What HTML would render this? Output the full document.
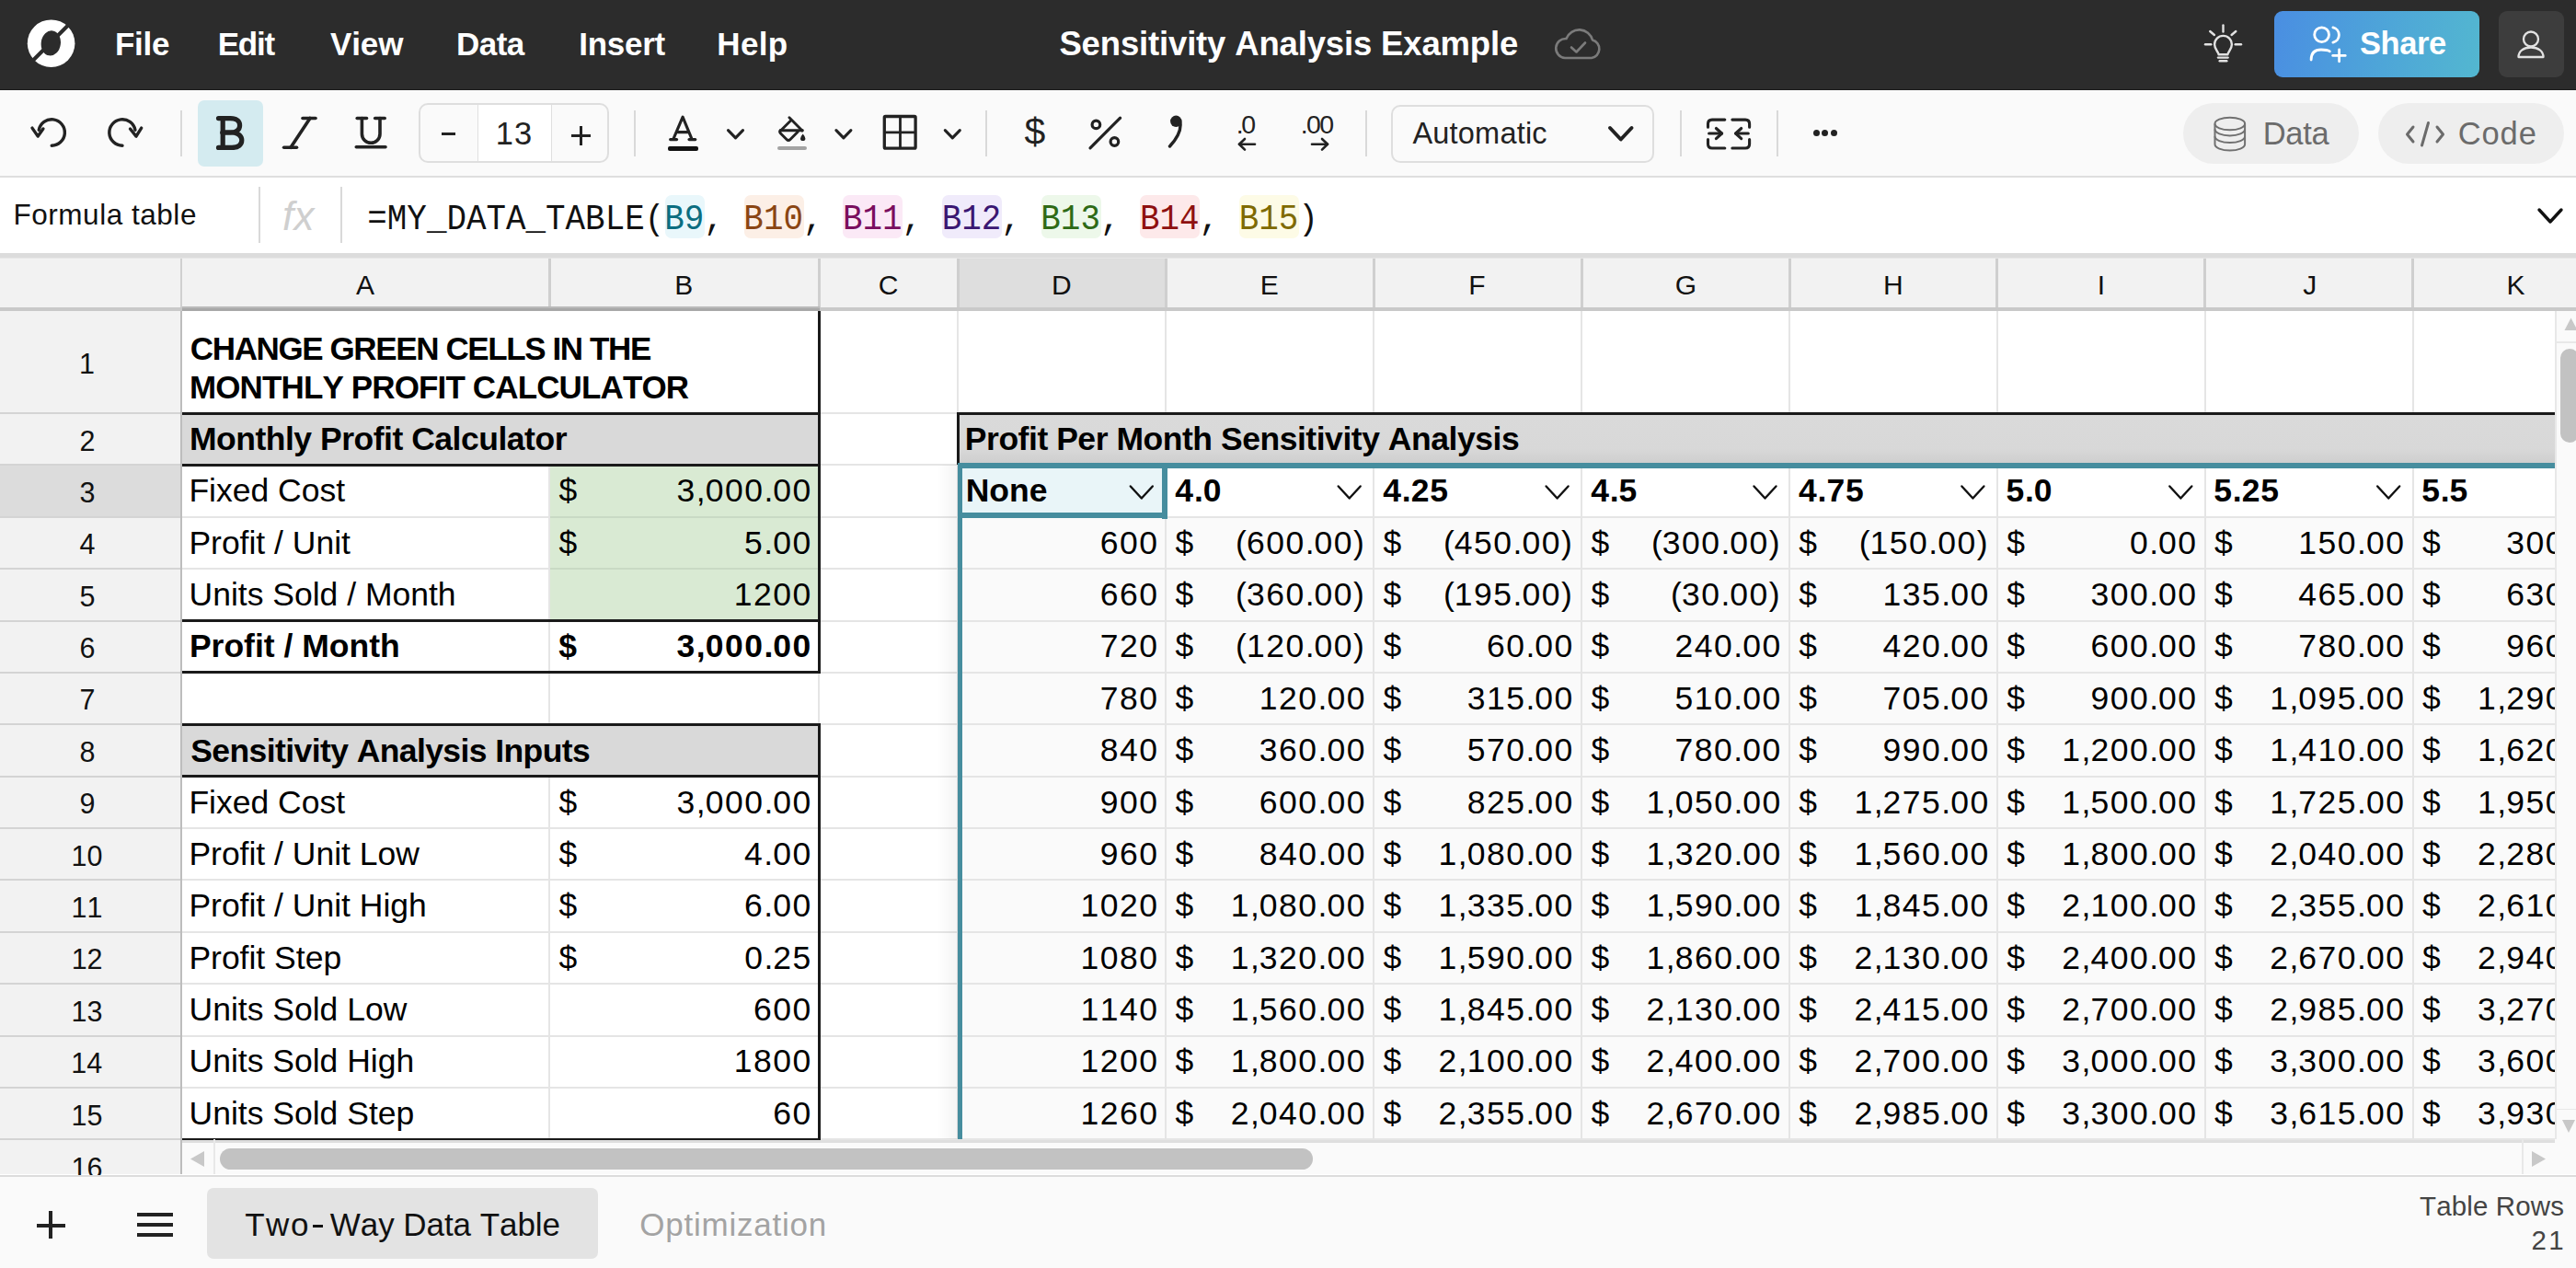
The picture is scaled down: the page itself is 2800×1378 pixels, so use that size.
<!DOCTYPE html>
<html><head><meta charset="utf-8"><title>Sensitivity Analysis Example</title>
<style>
html,body{margin:0;padding:0;}
body{width:2800px;height:1378px;overflow:hidden;position:relative;background:#fff;font-family:'Liberation Sans', sans-serif;font-kerning:none;}
.r,.t{position:absolute;}
.t{white-space:pre;}
svg.r{overflow:visible;}
</style></head><body>
<div class="r" style="left:0.00px;top:0.00px;width:2800.00px;height:97.00px;background:#2c2c2c;"></div>
<div class="r" style="left:0.00px;top:96.50px;width:2800.00px;height:1.80px;background:#1c1c1c;"></div>
<div class="r" style="left:0.00px;top:98.30px;width:2800.00px;height:1.20px;background:#ffffff;"></div>
<svg class="r" style="left:28px;top:20px;" width="56" height="56" viewBox="0 0 56 56"><circle cx="27.6" cy="27.2" r="25.8" fill="#fff"/><ellipse cx="27.3" cy="26.9" rx="10.6" ry="13.6" fill="#2c2c2c" transform="rotate(8 27.3 26.9)"/><line x1="47" y1="6.5" x2="6.5" y2="47" stroke="#2c2c2c" stroke-width="4"/></svg>
<div class="t" style="left:124.96px;top:29.77px;font-size:35px;line-height:35px;color:#fff;font-weight:bold;letter-spacing:-0.285px;">File</div>
<div class="t" style="left:236.66px;top:29.77px;font-size:35px;line-height:35px;color:#fff;font-weight:bold;letter-spacing:-1.178px;">Edit</div>
<div class="t" style="left:359.06px;top:29.77px;font-size:35px;line-height:35px;color:#fff;font-weight:bold;letter-spacing:-0.129px;">View</div>
<div class="t" style="left:496.06px;top:29.77px;font-size:35px;line-height:35px;color:#fff;font-weight:bold;letter-spacing:-0.548px;">Data</div>
<div class="t" style="left:629.36px;top:29.77px;font-size:35px;line-height:35px;color:#fff;font-weight:bold;letter-spacing:-0.308px;">Insert</div>
<div class="t" style="left:779.36px;top:29.77px;font-size:35px;line-height:35px;color:#fff;font-weight:bold;letter-spacing:0.311px;">Help</div>
<div class="t" style="left:1151.45px;top:30.00px;font-size:36.5px;line-height:36.5px;color:#fff;font-weight:bold;letter-spacing:-0.160px;">Sensitivity Analysis Example</div>
<svg class="r" style="left:1688px;top:28px;" width="56" height="40" viewBox="0 0 56 40"><path d="M13 35 H42 A10 10 0 0 0 43 15.5 A15 15 0 0 0 14.5 14 A10.5 10.5 0 0 0 13 35 Z" fill="none" stroke="#7b7b7b" stroke-width="2.6" stroke-linejoin="round"/><path d="M20 23.5 L25.5 28.5 L35 18.5" fill="none" stroke="#7b7b7b" stroke-width="2.6" stroke-linecap="round" stroke-linejoin="round"/></svg>
<svg class="r" style="left:2392px;top:24px;" width="48" height="48" viewBox="0 0 48 48"><g fill="none" stroke="#e2e2e2" stroke-width="2.4" stroke-linecap="round" stroke-linejoin="round"><line x1="24.5" y1="3.5" x2="24.5" y2="10.5"/><line x1="10.2" y1="10" x2="14.9" y2="14"/><line x1="38.3" y1="10" x2="33.6" y2="14"/><line x1="5" y1="24.3" x2="11.3" y2="24.3"/><line x1="37.7" y1="24.3" x2="44" y2="24.3"/><path d="M19.6 35.3 C19.6 32.5 15.1 30 15.1 24.3 A9.4 9.4 0 0 1 33.9 24.3 C33.9 30 29.4 32.5 29.4 35.3 Z"/><line x1="19" y1="38.6" x2="29.6" y2="38.6"/><line x1="20.7" y1="42.2" x2="28.3" y2="42.2"/></g></svg>
<div class="r" style="left:2472.00px;top:12.00px;width:223.00px;height:72.00px;background:linear-gradient(100deg,#4a8ee2 0%,#4ea6d8 55%,#53b7d0 100%);border-radius:9px;"></div>
<svg class="r" style="left:2505px;top:26px;" width="52" height="44" viewBox="0 0 52 44"><g fill="none" stroke="#fff" stroke-width="2.8" stroke-linecap="round"><circle cx="18.6" cy="11.7" r="7.9"/><path d="M30.9 3.9 A8.3 8.3 0 0 1 30.9 20.1"/><path d="M7.1 39 C7.1 32 11 28 18 28 C22 28 25.5 28.5 27.4 29.8"/><line x1="37.6" y1="28" x2="37.6" y2="40.8"/><line x1="30.7" y1="34.4" x2="44.2" y2="34.4"/></g></svg>
<div class="t" style="left:2564.91px;top:29.89px;font-size:34.5px;line-height:34.5px;color:#fff;font-weight:bold;letter-spacing:-0.403px;">Share</div>
<div class="r" style="left:2716.00px;top:12.00px;width:71.00px;height:72.00px;background:#3d3d3d;border-radius:9px;"></div>
<svg class="r" style="left:2730px;top:28px;" width="42" height="40" viewBox="0 0 42 40"><g fill="none" stroke="#e2e2e2" stroke-width="2.3"><circle cx="21" cy="14.5" r="8"/><path d="M7.5 34 C7.5 27.5 13 23.5 21 23.5 C29 23.5 34.5 27.5 34.5 34 Z" stroke-linejoin="round"/></g></svg>
<div class="r" style="left:0.00px;top:98.00px;width:2800.00px;height:93.00px;background:#fafafa;"></div>
<div class="r" style="left:0.00px;top:191.00px;width:2800.00px;height:2.00px;background:#dedede;"></div>
<svg class="r" style="left:28px;top:118px;" width="52" height="50" viewBox="0 0 52 50"><g fill="none" stroke="#222" stroke-width="3.4" stroke-linecap="round" stroke-linejoin="round"><path d="M14.26 23.3 A14.2 14.2 0 1 1 28.2 40.2"/><path d="M7 21.1 L13.2 30.1 L18.9 22"/></g></svg>
<svg class="r" style="left:100px;top:118px;" width="52" height="50" viewBox="0 0 52 50"><g fill="none" stroke="#222" stroke-width="3.4" stroke-linecap="round" stroke-linejoin="round"><path d="M46.94 23.3 A14.2 14.2 0 1 0 33 40.2"/><path d="M53.7 21.1 L48 30.1 L41.5 22"/></g></svg>
<div class="r" style="left:196.00px;top:119.60px;width:2.00px;height:50.40px;background:#d9d9d9;"></div>
<div class="r" style="left:214.80px;top:109.00px;width:71.20px;height:71.70px;background:#d4ebf0;border-radius:7px;"></div>
<svg class="r" style="left:228px;top:120px;" width="42" height="48" viewBox="0 0 42 48"><g fill="none" stroke="#222" stroke-width="5.2" stroke-linecap="round" stroke-linejoin="round"><path d="M9.5 8.6 H22.5 C30 8.6 32.6 12.5 32.6 16.3 C32.6 20.5 29.5 24 22.5 24 H14"/><path d="M14 24 H24 C31.5 24 34.8 28.5 34.8 32.3 C34.8 37 31.5 40.4 24 40.4 H9.5"/><line x1="14.2" y1="8.6" x2="14.2" y2="40.4"/></g></svg>
<svg class="r" style="left:300px;top:120px;" width="50" height="48" viewBox="0 0 50 48"><g fill="none" stroke="#222" stroke-width="3.6" stroke-linecap="round"><line x1="29" y1="8.5" x2="43" y2="8.5"/><line x1="8.6" y1="40.3" x2="22.5" y2="40.3"/><line x1="37" y1="8.5" x2="16" y2="40.3"/></g></svg>
<svg class="r" style="left:380px;top:120px;" width="46" height="48" viewBox="0 0 46 48"><g fill="none" stroke="#222" stroke-width="3.6" stroke-linecap="round"><line x1="8.2" y1="8.5" x2="18.5" y2="8.5"/><line x1="27.7" y1="8.5" x2="38.2" y2="8.5"/><path d="M13.4 8.5 V25.5 A9.8 9.8 0 0 0 33 25.5 V8.5"/><line x1="7.3" y1="39.7" x2="39" y2="39.7"/></g></svg>
<div class="r" style="left:455.40px;top:112.00px;width:207.00px;height:65.00px;background:#fafafa;border:2px solid #dedede;border-radius:10px;box-sizing:border-box;"></div>
<div class="r" style="left:519.50px;top:114.00px;width:80.00px;height:61.00px;background:#fff;"></div>
<div class="r" style="left:518.80px;top:114.00px;width:1.60px;height:61.00px;background:#e0e0e0;"></div>
<div class="r" style="left:598.80px;top:114.00px;width:1.60px;height:61.00px;background:#e0e0e0;"></div>
<div class="r" style="left:480.00px;top:144.00px;width:14.50px;height:3.20px;background:#222;"></div>
<div class="t" style="left:538.66px;top:128.39px;font-size:34.5px;line-height:34.5px;color:#222;letter-spacing:1.200px;">13</div>
<div class="r" style="left:621.00px;top:145.60px;width:20.50px;height:3.20px;background:#222;"></div>
<div class="r" style="left:629.60px;top:137.00px;width:3.20px;height:20.50px;background:#222;"></div>
<div class="r" style="left:689.40px;top:119.60px;width:2.00px;height:50.40px;background:#d9d9d9;"></div>
<svg class="r" style="left:722px;top:120px;" width="40" height="40" viewBox="0 0 40 40"><g fill="none" stroke="#222" stroke-width="3.1" stroke-linecap="round" stroke-linejoin="round"><path d="M9.9 31.2 L20.1 7.1 L30 31.2"/><line x1="14.8" y1="23.6" x2="25.5" y2="23.6"/><line x1="6.6" y1="31.6" x2="13.6" y2="31.6"/><line x1="27" y1="31.6" x2="33.8" y2="31.6"/></g></svg>
<div class="r" style="left:725.70px;top:159.40px;width:33.50px;height:4.20px;background:#111;border-radius:2px;"></div>
<svg class="r" style="left:788px;top:138px;" width="24" height="16" viewBox="0 0 24 16"><path d="M3.50 3.60 l8.00 8.20 l8.00 -8.20" fill="none" stroke="#222" stroke-width="3.1" stroke-linecap="round" stroke-linejoin="round"/></svg>
<svg class="r" style="left:842px;top:122px;" width="40" height="36" viewBox="0 0 40 36"><g fill="none" stroke="#222" stroke-width="2.9" stroke-linecap="round" stroke-linejoin="round"><path d="M15.9 5.7 L30 20"/><path d="M6 20.5 L17.3 9.3"/><path d="M6.2 19.8 H30.3"/><path d="M25.2 21.2 L17 29.5 Q15 31.5 13 29.5 L6.5 23 Q5 21.5 6.2 19.8"/></g><path d="M30.7 23.6 Q33.4 26.8 33.4 28.4 A2.7 2.7 0 0 1 28 28.4 Q28 26.8 30.7 23.6 Z" fill="#222"/></svg>
<div class="r" style="left:845.30px;top:159.40px;width:31.70px;height:3.70px;background:#a3a3a3;border-radius:2px;"></div>
<svg class="r" style="left:905px;top:138px;" width="24" height="16" viewBox="0 0 24 16"><path d="M3.90 3.60 l8.00 8.20 l8.00 -8.20" fill="none" stroke="#222" stroke-width="3.1" stroke-linecap="round" stroke-linejoin="round"/></svg>
<svg class="r" style="left:956px;top:122px;" width="46" height="44" viewBox="0 0 46 44"><g fill="none" stroke="#222" stroke-width="3.3" stroke-linejoin="round"><rect x="5.3" y="4.5" width="33.8" height="34.7" rx="1.2"/><line x1="22.5" y1="4.5" x2="22.5" y2="39.2" stroke-width="2.8"/><line x1="5.3" y1="21.9" x2="39.1" y2="21.9" stroke-width="2.8"/></g></svg>
<svg class="r" style="left:1023px;top:138px;" width="24" height="16" viewBox="0 0 24 16"><path d="M4.30 3.60 l8.00 8.20 l8.00 -8.20" fill="none" stroke="#222" stroke-width="3.1" stroke-linecap="round" stroke-linejoin="round"/></svg>
<div class="r" style="left:1071.30px;top:119.60px;width:2.00px;height:50.40px;background:#d9d9d9;"></div>
<div class="t" style="left:1113.51px;top:123.29px;font-size:41px;line-height:41px;color:#222;">$</div>
<svg class="r" style="left:1180px;top:124px;" width="44" height="42" viewBox="0 0 44 42"><g fill="none" stroke="#222" stroke-width="3.2" stroke-linecap="round"><circle cx="11.4" cy="11.4" r="4.3"/><circle cx="31.4" cy="30" r="4.3"/><line x1="37.6" y1="4.2" x2="5" y2="36.8"/></g></svg>
<svg class="r" style="left:1264px;top:122px;" width="28" height="42" viewBox="0 0 28 42"><circle cx="14.3" cy="9.8" r="6.2" fill="#222"/><path d="M18.5 9 C21 19 15 29 7.5 37" fill="none" stroke="#222" stroke-width="3.4" stroke-linecap="round"/></svg>
<div class="t" style="left:1343.80px;top:121.47px;font-size:28.5px;line-height:28.5px;color:#222;letter-spacing:-2.453px;">.0</div>
<svg class="r" style="left:1342px;top:148px;" width="28" height="18" viewBox="0 0 28 18"><g fill="none" stroke="#222" stroke-width="2.6" stroke-linecap="round" stroke-linejoin="round"><line x1="5" y1="8.8" x2="22" y2="8.8"/><path d="M11 3 L5 8.8 L11 14.6"/></g></svg>
<div class="t" style="left:1413.70px;top:121.47px;font-size:28.5px;line-height:28.5px;color:#222;letter-spacing:-1.652px;">.00</div>
<svg class="r" style="left:1421px;top:148px;" width="28" height="18" viewBox="0 0 28 18"><g fill="none" stroke="#222" stroke-width="2.6" stroke-linecap="round" stroke-linejoin="round"><line x1="5" y1="8.8" x2="22" y2="8.8"/><path d="M16 3 L22 8.8 L16 14.6"/></g></svg>
<div class="r" style="left:1484.30px;top:119.60px;width:2.00px;height:50.40px;background:#d9d9d9;"></div>
<div class="r" style="left:1512.30px;top:114.00px;width:286.20px;height:63.30px;background:#fafafa;border:2px solid #dedede;border-radius:10px;box-sizing:border-box;"></div>
<div class="t" style="left:1535.44px;top:128.78px;font-size:32.5px;line-height:32.5px;color:#222;letter-spacing:0.202px;">Automatic</div>
<svg class="r" style="left:1746px;top:135px;" width="32" height="20" viewBox="0 0 32 20"><path d="M4.00 4.00 l11.75 12.50 l11.75 -12.50" fill="none" stroke="#222" stroke-width="4" stroke-linecap="round" stroke-linejoin="round"/></svg>
<div class="r" style="left:1825.70px;top:119.60px;width:2.00px;height:50.40px;background:#d9d9d9;"></div>
<svg class="r" style="left:1850px;top:124px;" width="58" height="44" viewBox="0 0 58 44"><g fill="none" stroke="#222" stroke-width="3.1" stroke-linecap="round" stroke-linejoin="round"><path d="M24.8 6.1 H11 Q6.5 6.1 6.5 10.6 V14.2"/><path d="M6.5 27.6 V32.5 Q6.5 37 11 37 H24.8"/><path d="M32.9 6.1 H47.1 Q51.6 6.1 51.6 10.6 V14.2"/><path d="M51.6 27.6 V32.5 Q51.6 37 47.1 37 H32.9"/><line x1="7.6" y1="21" x2="21.6" y2="21"/><path d="M15.4 15.5 L21.6 21 L15.4 26.6"/><line x1="50.3" y1="21" x2="36.6" y2="21"/><path d="M42.7 15.5 L36.6 21 L42.7 26.6"/></g></svg>
<div class="r" style="left:1930.50px;top:119.60px;width:2.00px;height:50.40px;background:#d9d9d9;"></div>
<div class="r" style="left:1970.60px;top:140.70px;width:7.2px;height:7.2px;border-radius:50%;background:#222"></div>
<div class="r" style="left:1980.30px;top:140.70px;width:7.2px;height:7.2px;border-radius:50%;background:#222"></div>
<div class="r" style="left:1990.00px;top:140.70px;width:7.2px;height:7.2px;border-radius:50%;background:#222"></div>
<div class="r" style="left:2372.80px;top:112.30px;width:191.20px;height:65.40px;background:#eeeeee;border-radius:33px;"></div>
<svg class="r" style="left:2403px;top:123px;" width="42" height="46" viewBox="0 0 42 46"><g fill="none" stroke="#707070" stroke-width="2.0"><ellipse cx="20.8" cy="11.5" rx="16.3" ry="6.8"/><path d="M4.5 11.5 V33.8 A16.3 6.8 0 0 0 37.1 33.8 V11.5"/><path d="M4.5 17.6 A16.3 6.8 0 0 0 37.1 17.6"/><path d="M4.5 25.3 A16.3 6.8 0 0 0 37.1 25.3"/></g></svg>
<div class="t" style="left:2459.67px;top:127.99px;font-size:34.5px;line-height:34.5px;color:#6b6b6b;letter-spacing:-0.315px;">Data</div>
<div class="r" style="left:2585.40px;top:112.30px;width:201.60px;height:65.40px;background:#eeeeee;border-radius:33px;"></div>
<svg class="r" style="left:2612px;top:130px;" width="48" height="32" viewBox="0 0 48 32"><g fill="none" stroke="#6b6b6b" stroke-width="3" stroke-linecap="round" stroke-linejoin="round"><path d="M11 8 L4.5 16 L11 24"/><path d="M37 8 L43.5 16 L37 24"/><line x1="27.5" y1="3.5" x2="20.5" y2="28"/></g></svg>
<div class="t" style="left:2671.65px;top:127.99px;font-size:34.5px;line-height:34.5px;color:#6b6b6b;letter-spacing:0.936px;">Code</div>
<div class="r" style="left:0.00px;top:193.00px;width:2800.00px;height:82.00px;background:#fff;"></div>
<div class="r" style="left:0.00px;top:275.00px;width:2800.00px;height:5.00px;background:#dcdcdc;"></div>
<div class="t" style="left:14.52px;top:218.33px;font-size:31.5px;line-height:31.5px;color:#111;letter-spacing:0.525px;">Formula table</div>
<div class="r" style="left:281.00px;top:203.00px;width:2.00px;height:60.60px;background:#d9d9d9;"></div>
<div class="t" style="left:306.92px;top:213.35px;font-size:44px;line-height:44px;color:#cfcfcf;font-style:italic;letter-spacing:0.369px;">fx</div>
<div class="r" style="left:370.30px;top:203.00px;width:2.00px;height:60.60px;background:#d9d9d9;"></div>
<div class="r" style="left:722.55px;top:212.30px;width:43.56px;height:47.00px;background:#e9f7fb;border-radius:7px;"></div>
<div class="r" style="left:808.67px;top:212.30px;width:65.09px;height:47.00px;background:#fcefe6;border-radius:7px;"></div>
<div class="r" style="left:916.32px;top:212.30px;width:65.09px;height:47.00px;background:#fbe9f6;border-radius:7px;"></div>
<div class="r" style="left:1023.97px;top:212.30px;width:65.09px;height:47.00px;background:#f0ebfb;border-radius:7px;"></div>
<div class="r" style="left:1131.62px;top:212.30px;width:65.09px;height:47.00px;background:#edf8ea;border-radius:7px;"></div>
<div class="r" style="left:1239.27px;top:212.30px;width:65.09px;height:47.00px;background:#fde9ea;border-radius:7px;"></div>
<div class="r" style="left:1346.92px;top:212.30px;width:65.09px;height:47.00px;background:#fdfbe6;border-radius:7px;"></div>
<div class="t" style="left:399.30px;top:222.11px;font-size:35.883px;line-height:35.883px;color:#111;font-family:'Liberation Mono', monospace;transform-origin:0 27.49px;transform:scaleY(1.09);">=MY_DATA_TABLE(<span style="color:#0b6d80">B9</span>, <span style="color:#8a4513">B10</span>, <span style="color:#7a0e5e">B11</span>, <span style="color:#3a1772">B12</span>, <span style="color:#2e6a16">B13</span>, <span style="color:#8e1010">B14</span>, <span style="color:#7f6a00">B15</span>)</div>
<svg class="r" style="left:2756px;top:224px;" width="32" height="21" viewBox="0 0 32 21"><path d="M4.00 4.00 l12.00 13.00 l12.00 -13.00" fill="none" stroke="#111" stroke-width="3.4" stroke-linecap="round" stroke-linejoin="round"/></svg>
<div class="r" style="left:0.00px;top:280.00px;width:2800.00px;height:958.32px;background:#fff;"></div>
<div class="r" style="left:0.00px;top:280.00px;width:2800.00px;height:54.00px;background:#f2f2f2;"></div>
<div class="r" style="left:0.00px;top:280.00px;width:2800.00px;height:1.30px;background:#e6e6e6;"></div>
<div class="r" style="left:1041.40px;top:281.30px;width:225.90px;height:52.70px;background:#dedede;"></div>
<div class="t" style="left:387.10px;top:294.80px;font-size:30px;line-height:30px;color:#111;">A</div>
<div class="t" style="left:733.21px;top:294.80px;font-size:30px;line-height:30px;color:#111;">B</div>
<div class="t" style="left:954.83px;top:294.80px;font-size:30px;line-height:30px;color:#111;">C</div>
<div class="t" style="left:1143.00px;top:294.80px;font-size:30px;line-height:30px;color:#111;">D</div>
<div class="t" style="left:1369.66px;top:294.80px;font-size:30px;line-height:30px;color:#111;">E</div>
<div class="t" style="left:1596.36px;top:294.80px;font-size:30px;line-height:30px;color:#111;">F</div>
<div class="t" style="left:1820.75px;top:294.80px;font-size:30px;line-height:30px;color:#111;">G</div>
<div class="t" style="left:2047.11px;top:294.80px;font-size:30px;line-height:30px;color:#111;">H</div>
<div class="t" style="left:2279.68px;top:294.80px;font-size:30px;line-height:30px;color:#111;">I</div>
<div class="t" style="left:2503.13px;top:294.80px;font-size:30px;line-height:30px;color:#111;">J</div>
<div class="t" style="left:2724.58px;top:294.80px;font-size:30px;line-height:30px;color:#111;">K</div>
<div class="r" style="left:595.50px;top:281.00px;width:3.00px;height:53.00px;background:#cfcfcf;"></div>
<div class="r" style="left:888.80px;top:281.00px;width:3.00px;height:53.00px;background:#cfcfcf;"></div>
<div class="r" style="left:1039.90px;top:281.00px;width:3.00px;height:53.00px;background:#cfcfcf;"></div>
<div class="r" style="left:1265.80px;top:281.00px;width:3.00px;height:53.00px;background:#cfcfcf;"></div>
<div class="r" style="left:1491.70px;top:281.00px;width:3.00px;height:53.00px;background:#cfcfcf;"></div>
<div class="r" style="left:1717.60px;top:281.00px;width:3.00px;height:53.00px;background:#cfcfcf;"></div>
<div class="r" style="left:1943.50px;top:281.00px;width:3.00px;height:53.00px;background:#cfcfcf;"></div>
<div class="r" style="left:2169.40px;top:281.00px;width:3.00px;height:53.00px;background:#cfcfcf;"></div>
<div class="r" style="left:2395.30px;top:281.00px;width:3.00px;height:53.00px;background:#cfcfcf;"></div>
<div class="r" style="left:2621.20px;top:281.00px;width:3.00px;height:53.00px;background:#cfcfcf;"></div>
<div class="r" style="left:196.00px;top:281.00px;width:2.40px;height:53.00px;background:#d0d0d0;"></div>
<div class="r" style="left:0.00px;top:333.80px;width:2800.00px;height:3.80px;background:#c9c9c9;"></div>
<div class="r" style="left:198.00px;top:333.20px;width:692.50px;height:1.60px;background:#bababa;"></div>
<div class="r" style="left:198.00px;top:334.80px;width:692.50px;height:2.90px;background:#a8a8a8;"></div>
<div class="r" style="left:0.00px;top:337.50px;width:196.50px;height:938.50px;background:#f2f2f2;"></div>
<div class="r" style="left:0.00px;top:505.38px;width:196.50px;height:56.38px;background:#dcdcdc;"></div>
<div class="t" style="left:86.10px;top:379.63px;font-size:30.5px;line-height:30.5px;color:#111;">1</div>
<div class="t" style="left:86.52px;top:463.57px;font-size:30.5px;line-height:30.5px;color:#111;">2</div>
<div class="r" style="left:0.00px;top:448.00px;width:196.00px;height:2.00px;background:#d4d4d4;"></div>
<div class="t" style="left:86.61px;top:519.95px;font-size:30.5px;line-height:30.5px;color:#111;">3</div>
<div class="r" style="left:0.00px;top:504.00px;width:196.00px;height:2.00px;background:#d4d4d4;"></div>
<div class="t" style="left:86.62px;top:576.33px;font-size:30.5px;line-height:30.5px;color:#111;">4</div>
<div class="r" style="left:0.00px;top:561.00px;width:196.00px;height:2.00px;background:#d4d4d4;"></div>
<div class="t" style="left:86.55px;top:632.71px;font-size:30.5px;line-height:30.5px;color:#111;">5</div>
<div class="r" style="left:0.00px;top:617.00px;width:196.00px;height:2.00px;background:#d4d4d4;"></div>
<div class="t" style="left:86.41px;top:689.09px;font-size:30.5px;line-height:30.5px;color:#111;">6</div>
<div class="r" style="left:0.00px;top:674.00px;width:196.00px;height:2.00px;background:#d4d4d4;"></div>
<div class="t" style="left:86.50px;top:745.47px;font-size:30.5px;line-height:30.5px;color:#111;">7</div>
<div class="r" style="left:0.00px;top:730.00px;width:196.00px;height:2.00px;background:#d4d4d4;"></div>
<div class="t" style="left:86.52px;top:801.85px;font-size:30.5px;line-height:30.5px;color:#111;">8</div>
<div class="r" style="left:0.00px;top:786.00px;width:196.00px;height:2.00px;background:#d4d4d4;"></div>
<div class="t" style="left:86.53px;top:858.23px;font-size:30.5px;line-height:30.5px;color:#111;">9</div>
<div class="r" style="left:0.00px;top:843.00px;width:196.00px;height:2.00px;background:#d4d4d4;"></div>
<div class="t" style="left:77.47px;top:914.61px;font-size:30.5px;line-height:30.5px;color:#111;">10</div>
<div class="r" style="left:0.00px;top:899.00px;width:196.00px;height:2.00px;background:#d4d4d4;"></div>
<div class="t" style="left:77.62px;top:970.99px;font-size:30.5px;line-height:30.5px;color:#111;">11</div>
<div class="r" style="left:0.00px;top:955.00px;width:196.00px;height:2.00px;background:#d4d4d4;"></div>
<div class="t" style="left:77.64px;top:1027.37px;font-size:30.5px;line-height:30.5px;color:#111;">12</div>
<div class="r" style="left:0.00px;top:1012.00px;width:196.00px;height:2.00px;background:#d4d4d4;"></div>
<div class="t" style="left:77.55px;top:1083.75px;font-size:30.5px;line-height:30.5px;color:#111;">13</div>
<div class="r" style="left:0.00px;top:1068.00px;width:196.00px;height:2.00px;background:#d4d4d4;"></div>
<div class="t" style="left:77.32px;top:1140.13px;font-size:30.5px;line-height:30.5px;color:#111;">14</div>
<div class="r" style="left:0.00px;top:1125.00px;width:196.00px;height:2.00px;background:#d4d4d4;"></div>
<div class="t" style="left:77.52px;top:1196.51px;font-size:30.5px;line-height:30.5px;color:#111;">15</div>
<div class="r" style="left:0.00px;top:1181.00px;width:196.00px;height:2.00px;background:#d4d4d4;"></div>
<div class="t" style="left:77.55px;top:1254.09px;font-size:30.5px;line-height:30.5px;color:#111;">16</div>
<div class="r" style="left:0.00px;top:1237.00px;width:196.00px;height:2.00px;background:#d4d4d4;"></div>
<div class="r" style="left:195.50px;top:337.50px;width:2.60px;height:938.50px;background:#bdbdbd;"></div>
<div class="r" style="left:1041.40px;top:561.76px;width:1735.60px;height:676.56px;background:#fafafa;"></div>
<div class="r" style="left:198.10px;top:448.00px;width:2578.90px;height:2.00px;background:#e5e5e5;"></div>
<div class="r" style="left:198.10px;top:504.00px;width:2578.90px;height:2.00px;background:#e5e5e5;"></div>
<div class="r" style="left:198.10px;top:561.00px;width:2578.90px;height:2.00px;background:#e5e5e5;"></div>
<div class="r" style="left:198.10px;top:617.00px;width:2578.90px;height:2.00px;background:#e5e5e5;"></div>
<div class="r" style="left:198.10px;top:674.00px;width:2578.90px;height:2.00px;background:#e5e5e5;"></div>
<div class="r" style="left:198.10px;top:730.00px;width:2578.90px;height:2.00px;background:#e5e5e5;"></div>
<div class="r" style="left:198.10px;top:786.00px;width:2578.90px;height:2.00px;background:#e5e5e5;"></div>
<div class="r" style="left:198.10px;top:843.00px;width:2578.90px;height:2.00px;background:#e5e5e5;"></div>
<div class="r" style="left:198.10px;top:899.00px;width:2578.90px;height:2.00px;background:#e5e5e5;"></div>
<div class="r" style="left:198.10px;top:955.00px;width:2578.90px;height:2.00px;background:#e5e5e5;"></div>
<div class="r" style="left:198.10px;top:1012.00px;width:2578.90px;height:2.00px;background:#e5e5e5;"></div>
<div class="r" style="left:198.10px;top:1068.00px;width:2578.90px;height:2.00px;background:#e5e5e5;"></div>
<div class="r" style="left:198.10px;top:1125.00px;width:2578.90px;height:2.00px;background:#e5e5e5;"></div>
<div class="r" style="left:198.10px;top:1181.00px;width:2578.90px;height:2.00px;background:#e5e5e5;"></div>
<div class="r" style="left:198.10px;top:1237.00px;width:2578.90px;height:2.00px;background:#e5e5e5;"></div>
<div class="r" style="left:596.00px;top:337.50px;width:2.00px;height:900.82px;background:#e5e5e5;"></div>
<div class="r" style="left:889.00px;top:337.50px;width:2.00px;height:900.82px;background:#e5e5e5;"></div>
<div class="r" style="left:1040.00px;top:337.50px;width:2.00px;height:900.82px;background:#e5e5e5;"></div>
<div class="r" style="left:1266.00px;top:337.50px;width:2.00px;height:900.82px;background:#e5e5e5;"></div>
<div class="r" style="left:1492.00px;top:337.50px;width:2.00px;height:900.82px;background:#e5e5e5;"></div>
<div class="r" style="left:1718.00px;top:337.50px;width:2.00px;height:900.82px;background:#e5e5e5;"></div>
<div class="r" style="left:1944.00px;top:337.50px;width:2.00px;height:900.82px;background:#e5e5e5;"></div>
<div class="r" style="left:2170.00px;top:337.50px;width:2.00px;height:900.82px;background:#e5e5e5;"></div>
<div class="r" style="left:2396.00px;top:337.50px;width:2.00px;height:900.82px;background:#e5e5e5;"></div>
<div class="r" style="left:2622.00px;top:337.50px;width:2.00px;height:900.82px;background:#e5e5e5;"></div>
<div class="r" style="left:198.10px;top:337.50px;width:692.20px;height:111.50px;background:#fff;"></div>
<div class="r" style="left:198.10px;top:449.00px;width:692.20px;height:56.38px;background:#d9d9d9;"></div>
<div class="r" style="left:198.10px;top:787.28px;width:692.20px;height:56.38px;background:#d9d9d9;"></div>
<div class="r" style="left:598.10px;top:506.48px;width:291.10px;height:54.18px;background:#d9ead3;"></div>
<div class="r" style="left:598.10px;top:562.86px;width:291.10px;height:54.18px;background:#d9ead3;"></div>
<div class="r" style="left:598.10px;top:619.24px;width:291.10px;height:54.18px;background:#d9ead3;"></div>
<div class="r" style="left:598.10px;top:560.66px;width:291.10px;height:2.20px;background:#c9dac4;"></div>
<div class="r" style="left:598.10px;top:617.04px;width:291.10px;height:2.20px;background:#c9dac4;"></div>
<div class="r" style="left:1041.40px;top:449.00px;width:1735.60px;height:56.38px;background:linear-gradient(#dadada 0%,#d8d8d8 70%,#cdcdcd 100%);"></div>
<div class="r" style="left:1041.40px;top:505.38px;width:1735.60px;height:56.38px;background:#fff;"></div>
<div class="r" style="left:1266.00px;top:505.38px;width:2.00px;height:732.94px;background:#e5e5e5;"></div>
<div class="r" style="left:1492.00px;top:505.38px;width:2.00px;height:732.94px;background:#e5e5e5;"></div>
<div class="r" style="left:1718.00px;top:505.38px;width:2.00px;height:732.94px;background:#e5e5e5;"></div>
<div class="r" style="left:1944.00px;top:505.38px;width:2.00px;height:732.94px;background:#e5e5e5;"></div>
<div class="r" style="left:2170.00px;top:505.38px;width:2.00px;height:732.94px;background:#e5e5e5;"></div>
<div class="r" style="left:2396.00px;top:505.38px;width:2.00px;height:732.94px;background:#e5e5e5;"></div>
<div class="r" style="left:2622.00px;top:505.38px;width:2.00px;height:732.94px;background:#e5e5e5;"></div>
<div class="r" style="left:1041.40px;top:561.00px;width:1735.60px;height:2.00px;background:#e5e5e5;"></div>
<div class="r" style="left:1041.40px;top:505.38px;width:225.90px;height:56.38px;background:#e9f5f8;"></div>
<div class="r" style="left:1019.40px;top:505.38px;width:22.00px;height:732.94px;background:linear-gradient(90deg,rgba(0,0,0,0),rgba(0,0,0,0.045));"></div>
<div class="r" style="left:198.10px;top:448.00px;width:693.60px;height:3.00px;background:#1a1a1a;"></div>
<div class="r" style="left:198.10px;top:504.00px;width:693.60px;height:3.00px;background:#1a1a1a;"></div>
<div class="r" style="left:198.10px;top:673.00px;width:693.60px;height:3.00px;background:#1a1a1a;"></div>
<div class="r" style="left:198.10px;top:729.00px;width:693.60px;height:3.00px;background:#1a1a1a;"></div>
<div class="r" style="left:198.10px;top:786.00px;width:693.60px;height:3.00px;background:#1a1a1a;"></div>
<div class="r" style="left:198.10px;top:842.00px;width:693.60px;height:3.00px;background:#1a1a1a;"></div>
<div class="r" style="left:198.10px;top:1237.00px;width:693.60px;height:3.00px;background:#1a1a1a;"></div>
<div class="r" style="left:889.00px;top:337.50px;width:3.00px;height:394.80px;background:#1a1a1a;"></div>
<div class="r" style="left:889.00px;top:785.88px;width:3.00px;height:453.84px;background:#1a1a1a;"></div>
<div class="r" style="left:1040.40px;top:448.00px;width:1736.60px;height:3.00px;background:#1a1a1a;"></div>
<div class="r" style="left:1040.00px;top:449.00px;width:3.00px;height:56.38px;background:#1a1a1a;"></div>
<div class="r" style="left:1040.80px;top:503.38px;width:1736.20px;height:5.50px;background:#468d9e;"></div>
<div class="r" style="left:1040.80px;top:503.38px;width:5.60px;height:734.94px;background:#468d9e;"></div>
<div class="r" style="left:1263.00px;top:503.38px;width:5.60px;height:60.18px;background:#468d9e;"></div>
<div class="r" style="left:1040.80px;top:556.56px;width:227.80px;height:6.20px;background:#468d9e;"></div>
<div class="t" style="left:206.86px;top:360.77px;font-size:35px;line-height:35px;color:#000;font-weight:bold;letter-spacing:-1.390px;">CHANGE GREEN CELLS IN THE</div>
<div class="t" style="left:205.96px;top:403.37px;font-size:35px;line-height:35px;color:#000;font-weight:bold;letter-spacing:-0.861px;">MONTHLY PROFIT CALCULATOR</div>
<div class="t" style="left:205.93px;top:460.43px;font-size:35.5px;line-height:35.5px;color:#000;font-weight:bold;letter-spacing:-0.481px;">Monthly Profit Calculator</div>
<div class="t" style="left:207.28px;top:798.71px;font-size:35.5px;line-height:35.5px;color:#000;font-weight:bold;letter-spacing:-0.589px;">Sensitivity Analysis Inputs</div>
<div class="t" style="left:205.39px;top:516.31px;font-size:35.5px;line-height:35.5px;color:#000;">Fixed Cost</div>
<div class="t" style="left:607.42px;top:516.31px;font-size:35.5px;line-height:35.5px;color:#000;">$</div>
<div class="t" style="left:735.50px;top:516.31px;font-size:35.5px;line-height:35.5px;color:#000;"><span style="letter-spacing:1.500px">3</span>,<span style="letter-spacing:1.500px">0</span><span style="letter-spacing:1.500px">0</span><span style="letter-spacing:1.500px">0</span>.<span style="letter-spacing:1.500px">0</span>0</div>
<div class="t" style="left:205.39px;top:572.69px;font-size:35.5px;line-height:35.5px;color:#000;">Profit / Unit</div>
<div class="t" style="left:607.42px;top:572.69px;font-size:35.5px;line-height:35.5px;color:#000;">$</div>
<div class="t" style="left:809.09px;top:572.69px;font-size:35.5px;line-height:35.5px;color:#000;"><span style="letter-spacing:1.500px">5</span>.<span style="letter-spacing:1.500px">0</span>0</div>
<div class="t" style="left:205.56px;top:629.07px;font-size:35.5px;line-height:35.5px;color:#000;">Units Sold / Month</div>
<div class="t" style="left:797.71px;top:629.07px;font-size:35.5px;line-height:35.5px;color:#000;"><span style="letter-spacing:1.500px">1</span><span style="letter-spacing:1.500px">2</span><span style="letter-spacing:1.500px">0</span>0</div>
<div class="t" style="left:205.93px;top:685.45px;font-size:35.5px;line-height:35.5px;color:#000;font-weight:bold;">Profit / Month</div>
<div class="t" style="left:607.33px;top:685.45px;font-size:35.5px;line-height:35.5px;color:#000;font-weight:bold;">$</div>
<div class="t" style="left:735.57px;top:685.45px;font-size:35.5px;line-height:35.5px;color:#000;font-weight:bold;"><span style="letter-spacing:1.500px">3</span>,<span style="letter-spacing:1.500px">0</span><span style="letter-spacing:1.500px">0</span><span style="letter-spacing:1.500px">0</span>.<span style="letter-spacing:1.500px">0</span>0</div>
<div class="t" style="left:205.39px;top:854.59px;font-size:35.5px;line-height:35.5px;color:#000;">Fixed Cost</div>
<div class="t" style="left:607.42px;top:854.59px;font-size:35.5px;line-height:35.5px;color:#000;">$</div>
<div class="t" style="left:735.50px;top:854.59px;font-size:35.5px;line-height:35.5px;color:#000;"><span style="letter-spacing:1.500px">3</span>,<span style="letter-spacing:1.500px">0</span><span style="letter-spacing:1.500px">0</span><span style="letter-spacing:1.500px">0</span>.<span style="letter-spacing:1.500px">0</span>0</div>
<div class="t" style="left:205.39px;top:910.97px;font-size:35.5px;line-height:35.5px;color:#000;">Profit / Unit Low</div>
<div class="t" style="left:607.42px;top:910.97px;font-size:35.5px;line-height:35.5px;color:#000;">$</div>
<div class="t" style="left:809.09px;top:910.97px;font-size:35.5px;line-height:35.5px;color:#000;"><span style="letter-spacing:1.500px">4</span>.<span style="letter-spacing:1.500px">0</span>0</div>
<div class="t" style="left:205.39px;top:967.35px;font-size:35.5px;line-height:35.5px;color:#000;">Profit / Unit High</div>
<div class="t" style="left:607.42px;top:967.35px;font-size:35.5px;line-height:35.5px;color:#000;">$</div>
<div class="t" style="left:809.09px;top:967.35px;font-size:35.5px;line-height:35.5px;color:#000;"><span style="letter-spacing:1.500px">6</span>.<span style="letter-spacing:1.500px">0</span>0</div>
<div class="t" style="left:205.39px;top:1023.73px;font-size:35.5px;line-height:35.5px;color:#000;">Profit Step</div>
<div class="t" style="left:607.42px;top:1023.73px;font-size:35.5px;line-height:35.5px;color:#000;">$</div>
<div class="t" style="left:809.20px;top:1023.73px;font-size:35.5px;line-height:35.5px;color:#000;"><span style="letter-spacing:1.500px">0</span>.<span style="letter-spacing:1.500px">2</span>5</div>
<div class="t" style="left:205.56px;top:1080.11px;font-size:35.5px;line-height:35.5px;color:#000;">Units Sold Low</div>
<div class="t" style="left:818.96px;top:1080.11px;font-size:35.5px;line-height:35.5px;color:#000;"><span style="letter-spacing:1.500px">6</span><span style="letter-spacing:1.500px">0</span>0</div>
<div class="t" style="left:205.56px;top:1136.49px;font-size:35.5px;line-height:35.5px;color:#000;">Units Sold High</div>
<div class="t" style="left:797.71px;top:1136.49px;font-size:35.5px;line-height:35.5px;color:#000;"><span style="letter-spacing:1.500px">1</span><span style="letter-spacing:1.500px">8</span><span style="letter-spacing:1.500px">0</span>0</div>
<div class="t" style="left:205.56px;top:1192.87px;font-size:35.5px;line-height:35.5px;color:#000;">Units Sold Step</div>
<div class="t" style="left:840.20px;top:1192.87px;font-size:35.5px;line-height:35.5px;color:#000;"><span style="letter-spacing:1.500px">6</span>0</div>
<div class="t" style="left:1048.83px;top:460.43px;font-size:35.5px;line-height:35.5px;color:#000;font-weight:bold;letter-spacing:-0.461px;">Profit Per Month Sensitivity Analysis</div>
<div class="t" style="left:1049.63px;top:516.31px;font-size:35.5px;line-height:35.5px;color:#000;font-weight:bold;">None</div>
<svg class="r" style="left:1225px;top:524px;" width="32" height="21" viewBox="0 0 32 21"><path d="M3.80 4.50 l12.00 13.00 l12.00 -13.00" fill="none" stroke="#111" stroke-width="2.4" stroke-linecap="round" stroke-linejoin="round"/></svg>
<div class="t" style="left:1277.36px;top:516.31px;font-size:35.5px;line-height:35.5px;color:#000;font-weight:bold;"><span style="letter-spacing:0.800px">4</span>.0</div>
<svg class="r" style="left:1451px;top:524px;" width="32" height="21" viewBox="0 0 32 21"><path d="M3.70 4.50 l12.00 13.00 l12.00 -13.00" fill="none" stroke="#111" stroke-width="2.4" stroke-linecap="round" stroke-linejoin="round"/></svg>
<div class="t" style="left:1503.26px;top:516.31px;font-size:35.5px;line-height:35.5px;color:#000;font-weight:bold;"><span style="letter-spacing:0.800px">4</span>.<span style="letter-spacing:0.800px">2</span>5</div>
<svg class="r" style="left:1677px;top:524px;" width="32" height="21" viewBox="0 0 32 21"><path d="M3.60 4.50 l12.00 13.00 l12.00 -13.00" fill="none" stroke="#111" stroke-width="2.4" stroke-linecap="round" stroke-linejoin="round"/></svg>
<div class="t" style="left:1729.16px;top:516.31px;font-size:35.5px;line-height:35.5px;color:#000;font-weight:bold;"><span style="letter-spacing:0.800px">4</span>.5</div>
<svg class="r" style="left:1902px;top:524px;" width="32" height="21" viewBox="0 0 32 21"><path d="M4.50 4.50 l12.00 13.00 l12.00 -13.00" fill="none" stroke="#111" stroke-width="2.4" stroke-linecap="round" stroke-linejoin="round"/></svg>
<div class="t" style="left:1955.06px;top:516.31px;font-size:35.5px;line-height:35.5px;color:#000;font-weight:bold;"><span style="letter-spacing:0.800px">4</span>.<span style="letter-spacing:0.800px">7</span>5</div>
<svg class="r" style="left:2128px;top:524px;" width="32" height="21" viewBox="0 0 32 21"><path d="M4.40 4.50 l12.00 13.00 l12.00 -13.00" fill="none" stroke="#111" stroke-width="2.4" stroke-linecap="round" stroke-linejoin="round"/></svg>
<div class="t" style="left:2180.41px;top:516.31px;font-size:35.5px;line-height:35.5px;color:#000;font-weight:bold;"><span style="letter-spacing:0.800px">5</span>.0</div>
<svg class="r" style="left:2354px;top:524px;" width="32" height="21" viewBox="0 0 32 21"><path d="M4.30 4.50 l12.00 13.00 l12.00 -13.00" fill="none" stroke="#111" stroke-width="2.4" stroke-linecap="round" stroke-linejoin="round"/></svg>
<div class="t" style="left:2406.31px;top:516.31px;font-size:35.5px;line-height:35.5px;color:#000;font-weight:bold;"><span style="letter-spacing:0.800px">5</span>.<span style="letter-spacing:0.800px">2</span>5</div>
<svg class="r" style="left:2580px;top:524px;" width="32" height="21" viewBox="0 0 32 21"><path d="M4.20 4.50 l12.00 13.00 l12.00 -13.00" fill="none" stroke="#111" stroke-width="2.4" stroke-linecap="round" stroke-linejoin="round"/></svg>
<div class="t" style="left:2632.21px;top:516.31px;font-size:35.5px;line-height:35.5px;color:#000;font-weight:bold;"><span style="letter-spacing:0.800px">5</span>.5</div>
<svg class="r" style="left:2806px;top:524px;" width="32" height="21" viewBox="0 0 32 21"><path d="M4.10 4.50 l12.00 13.00 l12.00 -13.00" fill="none" stroke="#111" stroke-width="2.4" stroke-linecap="round" stroke-linejoin="round"/></svg>
<div class="t" style="left:1195.66px;top:572.69px;font-size:35.5px;line-height:35.5px;color:#000;"><span style="letter-spacing:1.500px">6</span><span style="letter-spacing:1.500px">0</span>0</div>
<div class="t" style="left:1277.62px;top:572.69px;font-size:35.5px;line-height:35.5px;color:#000;">$</div>
<div class="t" style="left:1343.08px;top:572.69px;font-size:35.5px;line-height:35.5px;color:#000;">(<span style="letter-spacing:1.500px">6</span><span style="letter-spacing:1.500px">0</span><span style="letter-spacing:1.500px">0</span>.<span style="letter-spacing:1.500px">0</span><span style="letter-spacing:1.500px">0</span>)</div>
<div class="t" style="left:1503.52px;top:572.69px;font-size:35.5px;line-height:35.5px;color:#000;">$</div>
<div class="t" style="left:1568.98px;top:572.69px;font-size:35.5px;line-height:35.5px;color:#000;">(<span style="letter-spacing:1.500px">4</span><span style="letter-spacing:1.500px">5</span><span style="letter-spacing:1.500px">0</span>.<span style="letter-spacing:1.500px">0</span><span style="letter-spacing:1.500px">0</span>)</div>
<div class="t" style="left:1729.42px;top:572.69px;font-size:35.5px;line-height:35.5px;color:#000;">$</div>
<div class="t" style="left:1794.88px;top:572.69px;font-size:35.5px;line-height:35.5px;color:#000;">(<span style="letter-spacing:1.500px">3</span><span style="letter-spacing:1.500px">0</span><span style="letter-spacing:1.500px">0</span>.<span style="letter-spacing:1.500px">0</span><span style="letter-spacing:1.500px">0</span>)</div>
<div class="t" style="left:1955.32px;top:572.69px;font-size:35.5px;line-height:35.5px;color:#000;">$</div>
<div class="t" style="left:2020.78px;top:572.69px;font-size:35.5px;line-height:35.5px;color:#000;">(<span style="letter-spacing:1.500px">1</span><span style="letter-spacing:1.500px">5</span><span style="letter-spacing:1.500px">0</span>.<span style="letter-spacing:1.500px">0</span><span style="letter-spacing:1.500px">0</span>)</div>
<div class="t" style="left:2181.22px;top:572.69px;font-size:35.5px;line-height:35.5px;color:#000;">$</div>
<div class="t" style="left:2314.89px;top:572.69px;font-size:35.5px;line-height:35.5px;color:#000;"><span style="letter-spacing:1.500px">0</span>.<span style="letter-spacing:1.500px">0</span>0</div>
<div class="t" style="left:2407.12px;top:572.69px;font-size:35.5px;line-height:35.5px;color:#000;">$</div>
<div class="t" style="left:2498.31px;top:572.69px;font-size:35.5px;line-height:35.5px;color:#000;"><span style="letter-spacing:1.500px">1</span><span style="letter-spacing:1.500px">5</span><span style="letter-spacing:1.500px">0</span>.<span style="letter-spacing:1.500px">0</span>0</div>
<div class="t" style="left:2633.02px;top:572.69px;font-size:35.5px;line-height:35.5px;color:#000;">$</div>
<div class="t" style="left:2724.21px;top:572.69px;font-size:35.5px;line-height:35.5px;color:#000;"><span style="letter-spacing:1.500px">3</span><span style="letter-spacing:1.500px">0</span><span style="letter-spacing:1.500px">0</span>.<span style="letter-spacing:1.500px">0</span>0</div>
<div class="t" style="left:1195.66px;top:629.07px;font-size:35.5px;line-height:35.5px;color:#000;"><span style="letter-spacing:1.500px">6</span><span style="letter-spacing:1.500px">6</span>0</div>
<div class="t" style="left:1277.62px;top:629.07px;font-size:35.5px;line-height:35.5px;color:#000;">$</div>
<div class="t" style="left:1343.08px;top:629.07px;font-size:35.5px;line-height:35.5px;color:#000;">(<span style="letter-spacing:1.500px">3</span><span style="letter-spacing:1.500px">6</span><span style="letter-spacing:1.500px">0</span>.<span style="letter-spacing:1.500px">0</span><span style="letter-spacing:1.500px">0</span>)</div>
<div class="t" style="left:1503.52px;top:629.07px;font-size:35.5px;line-height:35.5px;color:#000;">$</div>
<div class="t" style="left:1568.98px;top:629.07px;font-size:35.5px;line-height:35.5px;color:#000;">(<span style="letter-spacing:1.500px">1</span><span style="letter-spacing:1.500px">9</span><span style="letter-spacing:1.500px">5</span>.<span style="letter-spacing:1.500px">0</span><span style="letter-spacing:1.500px">0</span>)</div>
<div class="t" style="left:1729.42px;top:629.07px;font-size:35.5px;line-height:35.5px;color:#000;">$</div>
<div class="t" style="left:1816.12px;top:629.07px;font-size:35.5px;line-height:35.5px;color:#000;">(<span style="letter-spacing:1.500px">3</span><span style="letter-spacing:1.500px">0</span>.<span style="letter-spacing:1.500px">0</span><span style="letter-spacing:1.500px">0</span>)</div>
<div class="t" style="left:1955.32px;top:629.07px;font-size:35.5px;line-height:35.5px;color:#000;">$</div>
<div class="t" style="left:2046.51px;top:629.07px;font-size:35.5px;line-height:35.5px;color:#000;"><span style="letter-spacing:1.500px">1</span><span style="letter-spacing:1.500px">3</span><span style="letter-spacing:1.500px">5</span>.<span style="letter-spacing:1.500px">0</span>0</div>
<div class="t" style="left:2181.22px;top:629.07px;font-size:35.5px;line-height:35.5px;color:#000;">$</div>
<div class="t" style="left:2272.41px;top:629.07px;font-size:35.5px;line-height:35.5px;color:#000;"><span style="letter-spacing:1.500px">3</span><span style="letter-spacing:1.500px">0</span><span style="letter-spacing:1.500px">0</span>.<span style="letter-spacing:1.500px">0</span>0</div>
<div class="t" style="left:2407.12px;top:629.07px;font-size:35.5px;line-height:35.5px;color:#000;">$</div>
<div class="t" style="left:2498.31px;top:629.07px;font-size:35.5px;line-height:35.5px;color:#000;"><span style="letter-spacing:1.500px">4</span><span style="letter-spacing:1.500px">6</span><span style="letter-spacing:1.500px">5</span>.<span style="letter-spacing:1.500px">0</span>0</div>
<div class="t" style="left:2633.02px;top:629.07px;font-size:35.5px;line-height:35.5px;color:#000;">$</div>
<div class="t" style="left:2724.21px;top:629.07px;font-size:35.5px;line-height:35.5px;color:#000;"><span style="letter-spacing:1.500px">6</span><span style="letter-spacing:1.500px">3</span><span style="letter-spacing:1.500px">0</span>.<span style="letter-spacing:1.500px">0</span>0</div>
<div class="t" style="left:1195.66px;top:685.45px;font-size:35.5px;line-height:35.5px;color:#000;"><span style="letter-spacing:1.500px">7</span><span style="letter-spacing:1.500px">2</span>0</div>
<div class="t" style="left:1277.62px;top:685.45px;font-size:35.5px;line-height:35.5px;color:#000;">$</div>
<div class="t" style="left:1343.08px;top:685.45px;font-size:35.5px;line-height:35.5px;color:#000;">(<span style="letter-spacing:1.500px">1</span><span style="letter-spacing:1.500px">2</span><span style="letter-spacing:1.500px">0</span>.<span style="letter-spacing:1.500px">0</span><span style="letter-spacing:1.500px">0</span>)</div>
<div class="t" style="left:1503.52px;top:685.45px;font-size:35.5px;line-height:35.5px;color:#000;">$</div>
<div class="t" style="left:1615.95px;top:685.45px;font-size:35.5px;line-height:35.5px;color:#000;"><span style="letter-spacing:1.500px">6</span><span style="letter-spacing:1.500px">0</span>.<span style="letter-spacing:1.500px">0</span>0</div>
<div class="t" style="left:1729.42px;top:685.45px;font-size:35.5px;line-height:35.5px;color:#000;">$</div>
<div class="t" style="left:1820.61px;top:685.45px;font-size:35.5px;line-height:35.5px;color:#000;"><span style="letter-spacing:1.500px">2</span><span style="letter-spacing:1.500px">4</span><span style="letter-spacing:1.500px">0</span>.<span style="letter-spacing:1.500px">0</span>0</div>
<div class="t" style="left:1955.32px;top:685.45px;font-size:35.5px;line-height:35.5px;color:#000;">$</div>
<div class="t" style="left:2046.51px;top:685.45px;font-size:35.5px;line-height:35.5px;color:#000;"><span style="letter-spacing:1.500px">4</span><span style="letter-spacing:1.500px">2</span><span style="letter-spacing:1.500px">0</span>.<span style="letter-spacing:1.500px">0</span>0</div>
<div class="t" style="left:2181.22px;top:685.45px;font-size:35.5px;line-height:35.5px;color:#000;">$</div>
<div class="t" style="left:2272.41px;top:685.45px;font-size:35.5px;line-height:35.5px;color:#000;"><span style="letter-spacing:1.500px">6</span><span style="letter-spacing:1.500px">0</span><span style="letter-spacing:1.500px">0</span>.<span style="letter-spacing:1.500px">0</span>0</div>
<div class="t" style="left:2407.12px;top:685.45px;font-size:35.5px;line-height:35.5px;color:#000;">$</div>
<div class="t" style="left:2498.31px;top:685.45px;font-size:35.5px;line-height:35.5px;color:#000;"><span style="letter-spacing:1.500px">7</span><span style="letter-spacing:1.500px">8</span><span style="letter-spacing:1.500px">0</span>.<span style="letter-spacing:1.500px">0</span>0</div>
<div class="t" style="left:2633.02px;top:685.45px;font-size:35.5px;line-height:35.5px;color:#000;">$</div>
<div class="t" style="left:2724.21px;top:685.45px;font-size:35.5px;line-height:35.5px;color:#000;"><span style="letter-spacing:1.500px">9</span><span style="letter-spacing:1.500px">6</span><span style="letter-spacing:1.500px">0</span>.<span style="letter-spacing:1.500px">0</span>0</div>
<div class="t" style="left:1195.66px;top:741.83px;font-size:35.5px;line-height:35.5px;color:#000;"><span style="letter-spacing:1.500px">7</span><span style="letter-spacing:1.500px">8</span>0</div>
<div class="t" style="left:1277.62px;top:741.83px;font-size:35.5px;line-height:35.5px;color:#000;">$</div>
<div class="t" style="left:1368.81px;top:741.83px;font-size:35.5px;line-height:35.5px;color:#000;"><span style="letter-spacing:1.500px">1</span><span style="letter-spacing:1.500px">2</span><span style="letter-spacing:1.500px">0</span>.<span style="letter-spacing:1.500px">0</span>0</div>
<div class="t" style="left:1503.52px;top:741.83px;font-size:35.5px;line-height:35.5px;color:#000;">$</div>
<div class="t" style="left:1594.71px;top:741.83px;font-size:35.5px;line-height:35.5px;color:#000;"><span style="letter-spacing:1.500px">3</span><span style="letter-spacing:1.500px">1</span><span style="letter-spacing:1.500px">5</span>.<span style="letter-spacing:1.500px">0</span>0</div>
<div class="t" style="left:1729.42px;top:741.83px;font-size:35.5px;line-height:35.5px;color:#000;">$</div>
<div class="t" style="left:1820.61px;top:741.83px;font-size:35.5px;line-height:35.5px;color:#000;"><span style="letter-spacing:1.500px">5</span><span style="letter-spacing:1.500px">1</span><span style="letter-spacing:1.500px">0</span>.<span style="letter-spacing:1.500px">0</span>0</div>
<div class="t" style="left:1955.32px;top:741.83px;font-size:35.5px;line-height:35.5px;color:#000;">$</div>
<div class="t" style="left:2046.51px;top:741.83px;font-size:35.5px;line-height:35.5px;color:#000;"><span style="letter-spacing:1.500px">7</span><span style="letter-spacing:1.500px">0</span><span style="letter-spacing:1.500px">5</span>.<span style="letter-spacing:1.500px">0</span>0</div>
<div class="t" style="left:2181.22px;top:741.83px;font-size:35.5px;line-height:35.5px;color:#000;">$</div>
<div class="t" style="left:2272.41px;top:741.83px;font-size:35.5px;line-height:35.5px;color:#000;"><span style="letter-spacing:1.500px">9</span><span style="letter-spacing:1.500px">0</span><span style="letter-spacing:1.500px">0</span>.<span style="letter-spacing:1.500px">0</span>0</div>
<div class="t" style="left:2407.12px;top:741.83px;font-size:35.5px;line-height:35.5px;color:#000;">$</div>
<div class="t" style="left:2467.20px;top:741.83px;font-size:35.5px;line-height:35.5px;color:#000;"><span style="letter-spacing:1.500px">1</span>,<span style="letter-spacing:1.500px">0</span><span style="letter-spacing:1.500px">9</span><span style="letter-spacing:1.500px">5</span>.<span style="letter-spacing:1.500px">0</span>0</div>
<div class="t" style="left:2633.02px;top:741.83px;font-size:35.5px;line-height:35.5px;color:#000;">$</div>
<div class="t" style="left:2693.10px;top:741.83px;font-size:35.5px;line-height:35.5px;color:#000;"><span style="letter-spacing:1.500px">1</span>,<span style="letter-spacing:1.500px">2</span><span style="letter-spacing:1.500px">9</span><span style="letter-spacing:1.500px">0</span>.<span style="letter-spacing:1.500px">0</span>0</div>
<div class="t" style="left:1195.66px;top:798.21px;font-size:35.5px;line-height:35.5px;color:#000;"><span style="letter-spacing:1.500px">8</span><span style="letter-spacing:1.500px">4</span>0</div>
<div class="t" style="left:1277.62px;top:798.21px;font-size:35.5px;line-height:35.5px;color:#000;">$</div>
<div class="t" style="left:1368.81px;top:798.21px;font-size:35.5px;line-height:35.5px;color:#000;"><span style="letter-spacing:1.500px">3</span><span style="letter-spacing:1.500px">6</span><span style="letter-spacing:1.500px">0</span>.<span style="letter-spacing:1.500px">0</span>0</div>
<div class="t" style="left:1503.52px;top:798.21px;font-size:35.5px;line-height:35.5px;color:#000;">$</div>
<div class="t" style="left:1594.71px;top:798.21px;font-size:35.5px;line-height:35.5px;color:#000;"><span style="letter-spacing:1.500px">5</span><span style="letter-spacing:1.500px">7</span><span style="letter-spacing:1.500px">0</span>.<span style="letter-spacing:1.500px">0</span>0</div>
<div class="t" style="left:1729.42px;top:798.21px;font-size:35.5px;line-height:35.5px;color:#000;">$</div>
<div class="t" style="left:1820.61px;top:798.21px;font-size:35.5px;line-height:35.5px;color:#000;"><span style="letter-spacing:1.500px">7</span><span style="letter-spacing:1.500px">8</span><span style="letter-spacing:1.500px">0</span>.<span style="letter-spacing:1.500px">0</span>0</div>
<div class="t" style="left:1955.32px;top:798.21px;font-size:35.5px;line-height:35.5px;color:#000;">$</div>
<div class="t" style="left:2046.51px;top:798.21px;font-size:35.5px;line-height:35.5px;color:#000;"><span style="letter-spacing:1.500px">9</span><span style="letter-spacing:1.500px">9</span><span style="letter-spacing:1.500px">0</span>.<span style="letter-spacing:1.500px">0</span>0</div>
<div class="t" style="left:2181.22px;top:798.21px;font-size:35.5px;line-height:35.5px;color:#000;">$</div>
<div class="t" style="left:2241.30px;top:798.21px;font-size:35.5px;line-height:35.5px;color:#000;"><span style="letter-spacing:1.500px">1</span>,<span style="letter-spacing:1.500px">2</span><span style="letter-spacing:1.500px">0</span><span style="letter-spacing:1.500px">0</span>.<span style="letter-spacing:1.500px">0</span>0</div>
<div class="t" style="left:2407.12px;top:798.21px;font-size:35.5px;line-height:35.5px;color:#000;">$</div>
<div class="t" style="left:2467.20px;top:798.21px;font-size:35.5px;line-height:35.5px;color:#000;"><span style="letter-spacing:1.500px">1</span>,<span style="letter-spacing:1.500px">4</span><span style="letter-spacing:1.500px">1</span><span style="letter-spacing:1.500px">0</span>.<span style="letter-spacing:1.500px">0</span>0</div>
<div class="t" style="left:2633.02px;top:798.21px;font-size:35.5px;line-height:35.5px;color:#000;">$</div>
<div class="t" style="left:2693.10px;top:798.21px;font-size:35.5px;line-height:35.5px;color:#000;"><span style="letter-spacing:1.500px">1</span>,<span style="letter-spacing:1.500px">6</span><span style="letter-spacing:1.500px">2</span><span style="letter-spacing:1.500px">0</span>.<span style="letter-spacing:1.500px">0</span>0</div>
<div class="t" style="left:1195.66px;top:854.59px;font-size:35.5px;line-height:35.5px;color:#000;"><span style="letter-spacing:1.500px">9</span><span style="letter-spacing:1.500px">0</span>0</div>
<div class="t" style="left:1277.62px;top:854.59px;font-size:35.5px;line-height:35.5px;color:#000;">$</div>
<div class="t" style="left:1368.81px;top:854.59px;font-size:35.5px;line-height:35.5px;color:#000;"><span style="letter-spacing:1.500px">6</span><span style="letter-spacing:1.500px">0</span><span style="letter-spacing:1.500px">0</span>.<span style="letter-spacing:1.500px">0</span>0</div>
<div class="t" style="left:1503.52px;top:854.59px;font-size:35.5px;line-height:35.5px;color:#000;">$</div>
<div class="t" style="left:1594.71px;top:854.59px;font-size:35.5px;line-height:35.5px;color:#000;"><span style="letter-spacing:1.500px">8</span><span style="letter-spacing:1.500px">2</span><span style="letter-spacing:1.500px">5</span>.<span style="letter-spacing:1.500px">0</span>0</div>
<div class="t" style="left:1729.42px;top:854.59px;font-size:35.5px;line-height:35.5px;color:#000;">$</div>
<div class="t" style="left:1789.50px;top:854.59px;font-size:35.5px;line-height:35.5px;color:#000;"><span style="letter-spacing:1.500px">1</span>,<span style="letter-spacing:1.500px">0</span><span style="letter-spacing:1.500px">5</span><span style="letter-spacing:1.500px">0</span>.<span style="letter-spacing:1.500px">0</span>0</div>
<div class="t" style="left:1955.32px;top:854.59px;font-size:35.5px;line-height:35.5px;color:#000;">$</div>
<div class="t" style="left:2015.40px;top:854.59px;font-size:35.5px;line-height:35.5px;color:#000;"><span style="letter-spacing:1.500px">1</span>,<span style="letter-spacing:1.500px">2</span><span style="letter-spacing:1.500px">7</span><span style="letter-spacing:1.500px">5</span>.<span style="letter-spacing:1.500px">0</span>0</div>
<div class="t" style="left:2181.22px;top:854.59px;font-size:35.5px;line-height:35.5px;color:#000;">$</div>
<div class="t" style="left:2241.30px;top:854.59px;font-size:35.5px;line-height:35.5px;color:#000;"><span style="letter-spacing:1.500px">1</span>,<span style="letter-spacing:1.500px">5</span><span style="letter-spacing:1.500px">0</span><span style="letter-spacing:1.500px">0</span>.<span style="letter-spacing:1.500px">0</span>0</div>
<div class="t" style="left:2407.12px;top:854.59px;font-size:35.5px;line-height:35.5px;color:#000;">$</div>
<div class="t" style="left:2467.20px;top:854.59px;font-size:35.5px;line-height:35.5px;color:#000;"><span style="letter-spacing:1.500px">1</span>,<span style="letter-spacing:1.500px">7</span><span style="letter-spacing:1.500px">2</span><span style="letter-spacing:1.500px">5</span>.<span style="letter-spacing:1.500px">0</span>0</div>
<div class="t" style="left:2633.02px;top:854.59px;font-size:35.5px;line-height:35.5px;color:#000;">$</div>
<div class="t" style="left:2693.10px;top:854.59px;font-size:35.5px;line-height:35.5px;color:#000;"><span style="letter-spacing:1.500px">1</span>,<span style="letter-spacing:1.500px">9</span><span style="letter-spacing:1.500px">5</span><span style="letter-spacing:1.500px">0</span>.<span style="letter-spacing:1.500px">0</span>0</div>
<div class="t" style="left:1195.66px;top:910.97px;font-size:35.5px;line-height:35.5px;color:#000;"><span style="letter-spacing:1.500px">9</span><span style="letter-spacing:1.500px">6</span>0</div>
<div class="t" style="left:1277.62px;top:910.97px;font-size:35.5px;line-height:35.5px;color:#000;">$</div>
<div class="t" style="left:1368.81px;top:910.97px;font-size:35.5px;line-height:35.5px;color:#000;"><span style="letter-spacing:1.500px">8</span><span style="letter-spacing:1.500px">4</span><span style="letter-spacing:1.500px">0</span>.<span style="letter-spacing:1.500px">0</span>0</div>
<div class="t" style="left:1503.52px;top:910.97px;font-size:35.5px;line-height:35.5px;color:#000;">$</div>
<div class="t" style="left:1563.60px;top:910.97px;font-size:35.5px;line-height:35.5px;color:#000;"><span style="letter-spacing:1.500px">1</span>,<span style="letter-spacing:1.500px">0</span><span style="letter-spacing:1.500px">8</span><span style="letter-spacing:1.500px">0</span>.<span style="letter-spacing:1.500px">0</span>0</div>
<div class="t" style="left:1729.42px;top:910.97px;font-size:35.5px;line-height:35.5px;color:#000;">$</div>
<div class="t" style="left:1789.50px;top:910.97px;font-size:35.5px;line-height:35.5px;color:#000;"><span style="letter-spacing:1.500px">1</span>,<span style="letter-spacing:1.500px">3</span><span style="letter-spacing:1.500px">2</span><span style="letter-spacing:1.500px">0</span>.<span style="letter-spacing:1.500px">0</span>0</div>
<div class="t" style="left:1955.32px;top:910.97px;font-size:35.5px;line-height:35.5px;color:#000;">$</div>
<div class="t" style="left:2015.40px;top:910.97px;font-size:35.5px;line-height:35.5px;color:#000;"><span style="letter-spacing:1.500px">1</span>,<span style="letter-spacing:1.500px">5</span><span style="letter-spacing:1.500px">6</span><span style="letter-spacing:1.500px">0</span>.<span style="letter-spacing:1.500px">0</span>0</div>
<div class="t" style="left:2181.22px;top:910.97px;font-size:35.5px;line-height:35.5px;color:#000;">$</div>
<div class="t" style="left:2241.30px;top:910.97px;font-size:35.5px;line-height:35.5px;color:#000;"><span style="letter-spacing:1.500px">1</span>,<span style="letter-spacing:1.500px">8</span><span style="letter-spacing:1.500px">0</span><span style="letter-spacing:1.500px">0</span>.<span style="letter-spacing:1.500px">0</span>0</div>
<div class="t" style="left:2407.12px;top:910.97px;font-size:35.5px;line-height:35.5px;color:#000;">$</div>
<div class="t" style="left:2467.20px;top:910.97px;font-size:35.5px;line-height:35.5px;color:#000;"><span style="letter-spacing:1.500px">2</span>,<span style="letter-spacing:1.500px">0</span><span style="letter-spacing:1.500px">4</span><span style="letter-spacing:1.500px">0</span>.<span style="letter-spacing:1.500px">0</span>0</div>
<div class="t" style="left:2633.02px;top:910.97px;font-size:35.5px;line-height:35.5px;color:#000;">$</div>
<div class="t" style="left:2693.10px;top:910.97px;font-size:35.5px;line-height:35.5px;color:#000;"><span style="letter-spacing:1.500px">2</span>,<span style="letter-spacing:1.500px">2</span><span style="letter-spacing:1.500px">8</span><span style="letter-spacing:1.500px">0</span>.<span style="letter-spacing:1.500px">0</span>0</div>
<div class="t" style="left:1174.41px;top:967.35px;font-size:35.5px;line-height:35.5px;color:#000;"><span style="letter-spacing:1.500px">1</span><span style="letter-spacing:1.500px">0</span><span style="letter-spacing:1.500px">2</span>0</div>
<div class="t" style="left:1277.62px;top:967.35px;font-size:35.5px;line-height:35.5px;color:#000;">$</div>
<div class="t" style="left:1337.70px;top:967.35px;font-size:35.5px;line-height:35.5px;color:#000;"><span style="letter-spacing:1.500px">1</span>,<span style="letter-spacing:1.500px">0</span><span style="letter-spacing:1.500px">8</span><span style="letter-spacing:1.500px">0</span>.<span style="letter-spacing:1.500px">0</span>0</div>
<div class="t" style="left:1503.52px;top:967.35px;font-size:35.5px;line-height:35.5px;color:#000;">$</div>
<div class="t" style="left:1563.60px;top:967.35px;font-size:35.5px;line-height:35.5px;color:#000;"><span style="letter-spacing:1.500px">1</span>,<span style="letter-spacing:1.500px">3</span><span style="letter-spacing:1.500px">3</span><span style="letter-spacing:1.500px">5</span>.<span style="letter-spacing:1.500px">0</span>0</div>
<div class="t" style="left:1729.42px;top:967.35px;font-size:35.5px;line-height:35.5px;color:#000;">$</div>
<div class="t" style="left:1789.50px;top:967.35px;font-size:35.5px;line-height:35.5px;color:#000;"><span style="letter-spacing:1.500px">1</span>,<span style="letter-spacing:1.500px">5</span><span style="letter-spacing:1.500px">9</span><span style="letter-spacing:1.500px">0</span>.<span style="letter-spacing:1.500px">0</span>0</div>
<div class="t" style="left:1955.32px;top:967.35px;font-size:35.5px;line-height:35.5px;color:#000;">$</div>
<div class="t" style="left:2015.40px;top:967.35px;font-size:35.5px;line-height:35.5px;color:#000;"><span style="letter-spacing:1.500px">1</span>,<span style="letter-spacing:1.500px">8</span><span style="letter-spacing:1.500px">4</span><span style="letter-spacing:1.500px">5</span>.<span style="letter-spacing:1.500px">0</span>0</div>
<div class="t" style="left:2181.22px;top:967.35px;font-size:35.5px;line-height:35.5px;color:#000;">$</div>
<div class="t" style="left:2241.30px;top:967.35px;font-size:35.5px;line-height:35.5px;color:#000;"><span style="letter-spacing:1.500px">2</span>,<span style="letter-spacing:1.500px">1</span><span style="letter-spacing:1.500px">0</span><span style="letter-spacing:1.500px">0</span>.<span style="letter-spacing:1.500px">0</span>0</div>
<div class="t" style="left:2407.12px;top:967.35px;font-size:35.5px;line-height:35.5px;color:#000;">$</div>
<div class="t" style="left:2467.20px;top:967.35px;font-size:35.5px;line-height:35.5px;color:#000;"><span style="letter-spacing:1.500px">2</span>,<span style="letter-spacing:1.500px">3</span><span style="letter-spacing:1.500px">5</span><span style="letter-spacing:1.500px">5</span>.<span style="letter-spacing:1.500px">0</span>0</div>
<div class="t" style="left:2633.02px;top:967.35px;font-size:35.5px;line-height:35.5px;color:#000;">$</div>
<div class="t" style="left:2693.10px;top:967.35px;font-size:35.5px;line-height:35.5px;color:#000;"><span style="letter-spacing:1.500px">2</span>,<span style="letter-spacing:1.500px">6</span><span style="letter-spacing:1.500px">1</span><span style="letter-spacing:1.500px">0</span>.<span style="letter-spacing:1.500px">0</span>0</div>
<div class="t" style="left:1174.41px;top:1023.73px;font-size:35.5px;line-height:35.5px;color:#000;"><span style="letter-spacing:1.500px">1</span><span style="letter-spacing:1.500px">0</span><span style="letter-spacing:1.500px">8</span>0</div>
<div class="t" style="left:1277.62px;top:1023.73px;font-size:35.5px;line-height:35.5px;color:#000;">$</div>
<div class="t" style="left:1337.70px;top:1023.73px;font-size:35.5px;line-height:35.5px;color:#000;"><span style="letter-spacing:1.500px">1</span>,<span style="letter-spacing:1.500px">3</span><span style="letter-spacing:1.500px">2</span><span style="letter-spacing:1.500px">0</span>.<span style="letter-spacing:1.500px">0</span>0</div>
<div class="t" style="left:1503.52px;top:1023.73px;font-size:35.5px;line-height:35.5px;color:#000;">$</div>
<div class="t" style="left:1563.60px;top:1023.73px;font-size:35.5px;line-height:35.5px;color:#000;"><span style="letter-spacing:1.500px">1</span>,<span style="letter-spacing:1.500px">5</span><span style="letter-spacing:1.500px">9</span><span style="letter-spacing:1.500px">0</span>.<span style="letter-spacing:1.500px">0</span>0</div>
<div class="t" style="left:1729.42px;top:1023.73px;font-size:35.5px;line-height:35.5px;color:#000;">$</div>
<div class="t" style="left:1789.50px;top:1023.73px;font-size:35.5px;line-height:35.5px;color:#000;"><span style="letter-spacing:1.500px">1</span>,<span style="letter-spacing:1.500px">8</span><span style="letter-spacing:1.500px">6</span><span style="letter-spacing:1.500px">0</span>.<span style="letter-spacing:1.500px">0</span>0</div>
<div class="t" style="left:1955.32px;top:1023.73px;font-size:35.5px;line-height:35.5px;color:#000;">$</div>
<div class="t" style="left:2015.40px;top:1023.73px;font-size:35.5px;line-height:35.5px;color:#000;"><span style="letter-spacing:1.500px">2</span>,<span style="letter-spacing:1.500px">1</span><span style="letter-spacing:1.500px">3</span><span style="letter-spacing:1.500px">0</span>.<span style="letter-spacing:1.500px">0</span>0</div>
<div class="t" style="left:2181.22px;top:1023.73px;font-size:35.5px;line-height:35.5px;color:#000;">$</div>
<div class="t" style="left:2241.30px;top:1023.73px;font-size:35.5px;line-height:35.5px;color:#000;"><span style="letter-spacing:1.500px">2</span>,<span style="letter-spacing:1.500px">4</span><span style="letter-spacing:1.500px">0</span><span style="letter-spacing:1.500px">0</span>.<span style="letter-spacing:1.500px">0</span>0</div>
<div class="t" style="left:2407.12px;top:1023.73px;font-size:35.5px;line-height:35.5px;color:#000;">$</div>
<div class="t" style="left:2467.20px;top:1023.73px;font-size:35.5px;line-height:35.5px;color:#000;"><span style="letter-spacing:1.500px">2</span>,<span style="letter-spacing:1.500px">6</span><span style="letter-spacing:1.500px">7</span><span style="letter-spacing:1.500px">0</span>.<span style="letter-spacing:1.500px">0</span>0</div>
<div class="t" style="left:2633.02px;top:1023.73px;font-size:35.5px;line-height:35.5px;color:#000;">$</div>
<div class="t" style="left:2693.10px;top:1023.73px;font-size:35.5px;line-height:35.5px;color:#000;"><span style="letter-spacing:1.500px">2</span>,<span style="letter-spacing:1.500px">9</span><span style="letter-spacing:1.500px">4</span><span style="letter-spacing:1.500px">0</span>.<span style="letter-spacing:1.500px">0</span>0</div>
<div class="t" style="left:1174.41px;top:1080.11px;font-size:35.5px;line-height:35.5px;color:#000;"><span style="letter-spacing:1.500px">1</span><span style="letter-spacing:1.500px">1</span><span style="letter-spacing:1.500px">4</span>0</div>
<div class="t" style="left:1277.62px;top:1080.11px;font-size:35.5px;line-height:35.5px;color:#000;">$</div>
<div class="t" style="left:1337.70px;top:1080.11px;font-size:35.5px;line-height:35.5px;color:#000;"><span style="letter-spacing:1.500px">1</span>,<span style="letter-spacing:1.500px">5</span><span style="letter-spacing:1.500px">6</span><span style="letter-spacing:1.500px">0</span>.<span style="letter-spacing:1.500px">0</span>0</div>
<div class="t" style="left:1503.52px;top:1080.11px;font-size:35.5px;line-height:35.5px;color:#000;">$</div>
<div class="t" style="left:1563.60px;top:1080.11px;font-size:35.5px;line-height:35.5px;color:#000;"><span style="letter-spacing:1.500px">1</span>,<span style="letter-spacing:1.500px">8</span><span style="letter-spacing:1.500px">4</span><span style="letter-spacing:1.500px">5</span>.<span style="letter-spacing:1.500px">0</span>0</div>
<div class="t" style="left:1729.42px;top:1080.11px;font-size:35.5px;line-height:35.5px;color:#000;">$</div>
<div class="t" style="left:1789.50px;top:1080.11px;font-size:35.5px;line-height:35.5px;color:#000;"><span style="letter-spacing:1.500px">2</span>,<span style="letter-spacing:1.500px">1</span><span style="letter-spacing:1.500px">3</span><span style="letter-spacing:1.500px">0</span>.<span style="letter-spacing:1.500px">0</span>0</div>
<div class="t" style="left:1955.32px;top:1080.11px;font-size:35.5px;line-height:35.5px;color:#000;">$</div>
<div class="t" style="left:2015.40px;top:1080.11px;font-size:35.5px;line-height:35.5px;color:#000;"><span style="letter-spacing:1.500px">2</span>,<span style="letter-spacing:1.500px">4</span><span style="letter-spacing:1.500px">1</span><span style="letter-spacing:1.500px">5</span>.<span style="letter-spacing:1.500px">0</span>0</div>
<div class="t" style="left:2181.22px;top:1080.11px;font-size:35.5px;line-height:35.5px;color:#000;">$</div>
<div class="t" style="left:2241.30px;top:1080.11px;font-size:35.5px;line-height:35.5px;color:#000;"><span style="letter-spacing:1.500px">2</span>,<span style="letter-spacing:1.500px">7</span><span style="letter-spacing:1.500px">0</span><span style="letter-spacing:1.500px">0</span>.<span style="letter-spacing:1.500px">0</span>0</div>
<div class="t" style="left:2407.12px;top:1080.11px;font-size:35.5px;line-height:35.5px;color:#000;">$</div>
<div class="t" style="left:2467.20px;top:1080.11px;font-size:35.5px;line-height:35.5px;color:#000;"><span style="letter-spacing:1.500px">2</span>,<span style="letter-spacing:1.500px">9</span><span style="letter-spacing:1.500px">8</span><span style="letter-spacing:1.500px">5</span>.<span style="letter-spacing:1.500px">0</span>0</div>
<div class="t" style="left:2633.02px;top:1080.11px;font-size:35.5px;line-height:35.5px;color:#000;">$</div>
<div class="t" style="left:2693.10px;top:1080.11px;font-size:35.5px;line-height:35.5px;color:#000;"><span style="letter-spacing:1.500px">3</span>,<span style="letter-spacing:1.500px">2</span><span style="letter-spacing:1.500px">7</span><span style="letter-spacing:1.500px">0</span>.<span style="letter-spacing:1.500px">0</span>0</div>
<div class="t" style="left:1174.41px;top:1136.49px;font-size:35.5px;line-height:35.5px;color:#000;"><span style="letter-spacing:1.500px">1</span><span style="letter-spacing:1.500px">2</span><span style="letter-spacing:1.500px">0</span>0</div>
<div class="t" style="left:1277.62px;top:1136.49px;font-size:35.5px;line-height:35.5px;color:#000;">$</div>
<div class="t" style="left:1337.70px;top:1136.49px;font-size:35.5px;line-height:35.5px;color:#000;"><span style="letter-spacing:1.500px">1</span>,<span style="letter-spacing:1.500px">8</span><span style="letter-spacing:1.500px">0</span><span style="letter-spacing:1.500px">0</span>.<span style="letter-spacing:1.500px">0</span>0</div>
<div class="t" style="left:1503.52px;top:1136.49px;font-size:35.5px;line-height:35.5px;color:#000;">$</div>
<div class="t" style="left:1563.60px;top:1136.49px;font-size:35.5px;line-height:35.5px;color:#000;"><span style="letter-spacing:1.500px">2</span>,<span style="letter-spacing:1.500px">1</span><span style="letter-spacing:1.500px">0</span><span style="letter-spacing:1.500px">0</span>.<span style="letter-spacing:1.500px">0</span>0</div>
<div class="t" style="left:1729.42px;top:1136.49px;font-size:35.5px;line-height:35.5px;color:#000;">$</div>
<div class="t" style="left:1789.50px;top:1136.49px;font-size:35.5px;line-height:35.5px;color:#000;"><span style="letter-spacing:1.500px">2</span>,<span style="letter-spacing:1.500px">4</span><span style="letter-spacing:1.500px">0</span><span style="letter-spacing:1.500px">0</span>.<span style="letter-spacing:1.500px">0</span>0</div>
<div class="t" style="left:1955.32px;top:1136.49px;font-size:35.5px;line-height:35.5px;color:#000;">$</div>
<div class="t" style="left:2015.40px;top:1136.49px;font-size:35.5px;line-height:35.5px;color:#000;"><span style="letter-spacing:1.500px">2</span>,<span style="letter-spacing:1.500px">7</span><span style="letter-spacing:1.500px">0</span><span style="letter-spacing:1.500px">0</span>.<span style="letter-spacing:1.500px">0</span>0</div>
<div class="t" style="left:2181.22px;top:1136.49px;font-size:35.5px;line-height:35.5px;color:#000;">$</div>
<div class="t" style="left:2241.30px;top:1136.49px;font-size:35.5px;line-height:35.5px;color:#000;"><span style="letter-spacing:1.500px">3</span>,<span style="letter-spacing:1.500px">0</span><span style="letter-spacing:1.500px">0</span><span style="letter-spacing:1.500px">0</span>.<span style="letter-spacing:1.500px">0</span>0</div>
<div class="t" style="left:2407.12px;top:1136.49px;font-size:35.5px;line-height:35.5px;color:#000;">$</div>
<div class="t" style="left:2467.20px;top:1136.49px;font-size:35.5px;line-height:35.5px;color:#000;"><span style="letter-spacing:1.500px">3</span>,<span style="letter-spacing:1.500px">3</span><span style="letter-spacing:1.500px">0</span><span style="letter-spacing:1.500px">0</span>.<span style="letter-spacing:1.500px">0</span>0</div>
<div class="t" style="left:2633.02px;top:1136.49px;font-size:35.5px;line-height:35.5px;color:#000;">$</div>
<div class="t" style="left:2693.10px;top:1136.49px;font-size:35.5px;line-height:35.5px;color:#000;"><span style="letter-spacing:1.500px">3</span>,<span style="letter-spacing:1.500px">6</span><span style="letter-spacing:1.500px">0</span><span style="letter-spacing:1.500px">0</span>.<span style="letter-spacing:1.500px">0</span>0</div>
<div class="t" style="left:1174.41px;top:1192.87px;font-size:35.5px;line-height:35.5px;color:#000;"><span style="letter-spacing:1.500px">1</span><span style="letter-spacing:1.500px">2</span><span style="letter-spacing:1.500px">6</span>0</div>
<div class="t" style="left:1277.62px;top:1192.87px;font-size:35.5px;line-height:35.5px;color:#000;">$</div>
<div class="t" style="left:1337.70px;top:1192.87px;font-size:35.5px;line-height:35.5px;color:#000;"><span style="letter-spacing:1.500px">2</span>,<span style="letter-spacing:1.500px">0</span><span style="letter-spacing:1.500px">4</span><span style="letter-spacing:1.500px">0</span>.<span style="letter-spacing:1.500px">0</span>0</div>
<div class="t" style="left:1503.52px;top:1192.87px;font-size:35.5px;line-height:35.5px;color:#000;">$</div>
<div class="t" style="left:1563.60px;top:1192.87px;font-size:35.5px;line-height:35.5px;color:#000;"><span style="letter-spacing:1.500px">2</span>,<span style="letter-spacing:1.500px">3</span><span style="letter-spacing:1.500px">5</span><span style="letter-spacing:1.500px">5</span>.<span style="letter-spacing:1.500px">0</span>0</div>
<div class="t" style="left:1729.42px;top:1192.87px;font-size:35.5px;line-height:35.5px;color:#000;">$</div>
<div class="t" style="left:1789.50px;top:1192.87px;font-size:35.5px;line-height:35.5px;color:#000;"><span style="letter-spacing:1.500px">2</span>,<span style="letter-spacing:1.500px">6</span><span style="letter-spacing:1.500px">7</span><span style="letter-spacing:1.500px">0</span>.<span style="letter-spacing:1.500px">0</span>0</div>
<div class="t" style="left:1955.32px;top:1192.87px;font-size:35.5px;line-height:35.5px;color:#000;">$</div>
<div class="t" style="left:2015.40px;top:1192.87px;font-size:35.5px;line-height:35.5px;color:#000;"><span style="letter-spacing:1.500px">2</span>,<span style="letter-spacing:1.500px">9</span><span style="letter-spacing:1.500px">8</span><span style="letter-spacing:1.500px">5</span>.<span style="letter-spacing:1.500px">0</span>0</div>
<div class="t" style="left:2181.22px;top:1192.87px;font-size:35.5px;line-height:35.5px;color:#000;">$</div>
<div class="t" style="left:2241.30px;top:1192.87px;font-size:35.5px;line-height:35.5px;color:#000;"><span style="letter-spacing:1.500px">3</span>,<span style="letter-spacing:1.500px">3</span><span style="letter-spacing:1.500px">0</span><span style="letter-spacing:1.500px">0</span>.<span style="letter-spacing:1.500px">0</span>0</div>
<div class="t" style="left:2407.12px;top:1192.87px;font-size:35.5px;line-height:35.5px;color:#000;">$</div>
<div class="t" style="left:2467.20px;top:1192.87px;font-size:35.5px;line-height:35.5px;color:#000;"><span style="letter-spacing:1.500px">3</span>,<span style="letter-spacing:1.500px">6</span><span style="letter-spacing:1.500px">1</span><span style="letter-spacing:1.500px">5</span>.<span style="letter-spacing:1.500px">0</span>0</div>
<div class="t" style="left:2633.02px;top:1192.87px;font-size:35.5px;line-height:35.5px;color:#000;">$</div>
<div class="t" style="left:2693.10px;top:1192.87px;font-size:35.5px;line-height:35.5px;color:#000;"><span style="letter-spacing:1.500px">3</span>,<span style="letter-spacing:1.500px">9</span><span style="letter-spacing:1.500px">3</span><span style="letter-spacing:1.500px">0</span>.<span style="letter-spacing:1.500px">0</span>0</div>
<div class="r" style="left:2777.00px;top:337.50px;width:23.00px;height:938.50px;background:#fafafa;"></div>
<div class="r" style="left:2777.00px;top:337.50px;width:1.50px;height:938.50px;background:#e8e8e8;"></div>
<svg class="r" style="left:2786px;top:344px;" width="17" height="18" viewBox="0 0 17 18"><path d="M1.5 15 L8.5 1.5 L15.5 15 Z" fill="#c8c8c8"/></svg>
<div class="r" style="left:2777.00px;top:371.00px;width:23.00px;height:1.50px;background:#e8e8e8;"></div>
<div class="r" style="left:2783.00px;top:378.50px;width:20.00px;height:102.00px;background:#c2c2c2;border-radius:10px;"></div>
<div class="r" style="left:2777.00px;top:1204.50px;width:23.00px;height:1.50px;background:#e8e8e8;"></div>
<svg class="r" style="left:2783px;top:1215px;" width="17" height="18" viewBox="0 0 17 18"><path d="M2 2 L9 16 L16 2 Z" fill="#c8c8c8"/></svg>
<div class="r" style="left:198.10px;top:1238.82px;width:2578.90px;height:37.18px;background:#fafafa;"></div>
<div class="r" style="left:198.10px;top:1238.92px;width:2578.90px;height:3.00px;background:#dedede;"></div>
<div class="r" style="left:232.00px;top:1238.32px;width:1.50px;height:37.68px;background:#e8e8e8;"></div>
<svg class="r" style="left:204px;top:1249px;" width="22" height="22" viewBox="0 0 22 22"><path d="M18 2 L3 10.5 L18 19 Z" fill="#c8c8c8"/></svg>
<div class="r" style="left:239.30px;top:1247.90px;width:1187.70px;height:22.80px;background:#c2c2c2;border-radius:12px;"></div>
<div class="r" style="left:2741.00px;top:1238.32px;width:1.50px;height:37.68px;background:#e8e8e8;"></div>
<svg class="r" style="left:2749px;top:1249px;" width="22" height="22" viewBox="0 0 22 22"><path d="M3 2 L18 10.5 L3 19 Z" fill="#c8c8c8"/></svg>
<div class="r" style="left:2777.00px;top:1238.32px;width:23.00px;height:37.68px;background:#fafafa;"></div>
<div class="r" style="left:0.00px;top:1276.50px;width:2800.00px;height:2.80px;background:#dcdcdc;"></div>
<div class="r" style="left:0.00px;top:1279.30px;width:2800.00px;height:98.70px;background:#fafafa;"></div>
<div class="r" style="left:40.00px;top:1329.50px;width:30.50px;height:4.20px;background:#222;"></div>
<div class="r" style="left:53.20px;top:1315.70px;width:4.20px;height:30.30px;background:#222;"></div>
<div class="r" style="left:149.00px;top:1318.00px;width:39.00px;height:4.20px;background:#222;"></div>
<div class="r" style="left:149.00px;top:1329.00px;width:39.00px;height:4.20px;background:#222;"></div>
<div class="r" style="left:149.00px;top:1339.60px;width:39.00px;height:4.20px;background:#222;"></div>
<div class="r" style="left:225.00px;top:1290.70px;width:424.50px;height:77.20px;background:#e3e3e3;border-radius:7px;"></div>
<div class="t" style="left:266.21px;top:1312.87px;font-size:35px;line-height:35px;color:#111;letter-spacing:1.518px;">Two</div>
<div class="r" style="left:340.20px;top:1330.60px;width:10.70px;height:3.00px;background:#111;"></div>
<div class="t" style="left:358.77px;top:1312.87px;font-size:35px;line-height:35px;color:#111;letter-spacing:-0.050px;">Way Data Table</div>
<div class="t" style="left:695.14px;top:1312.87px;font-size:35px;line-height:35px;color:#a3a3a3;letter-spacing:0.783px;">Optimization</div>
<div class="t" style="left:2630.04px;top:1296.32px;font-size:29.5px;line-height:29.5px;color:#444;letter-spacing:0.142px;">Table Rows</div>
<div class="t" style="left:2751.52px;top:1333.02px;font-size:29.5px;line-height:29.5px;color:#444;letter-spacing:2.311px;">21</div>
</body></html>
